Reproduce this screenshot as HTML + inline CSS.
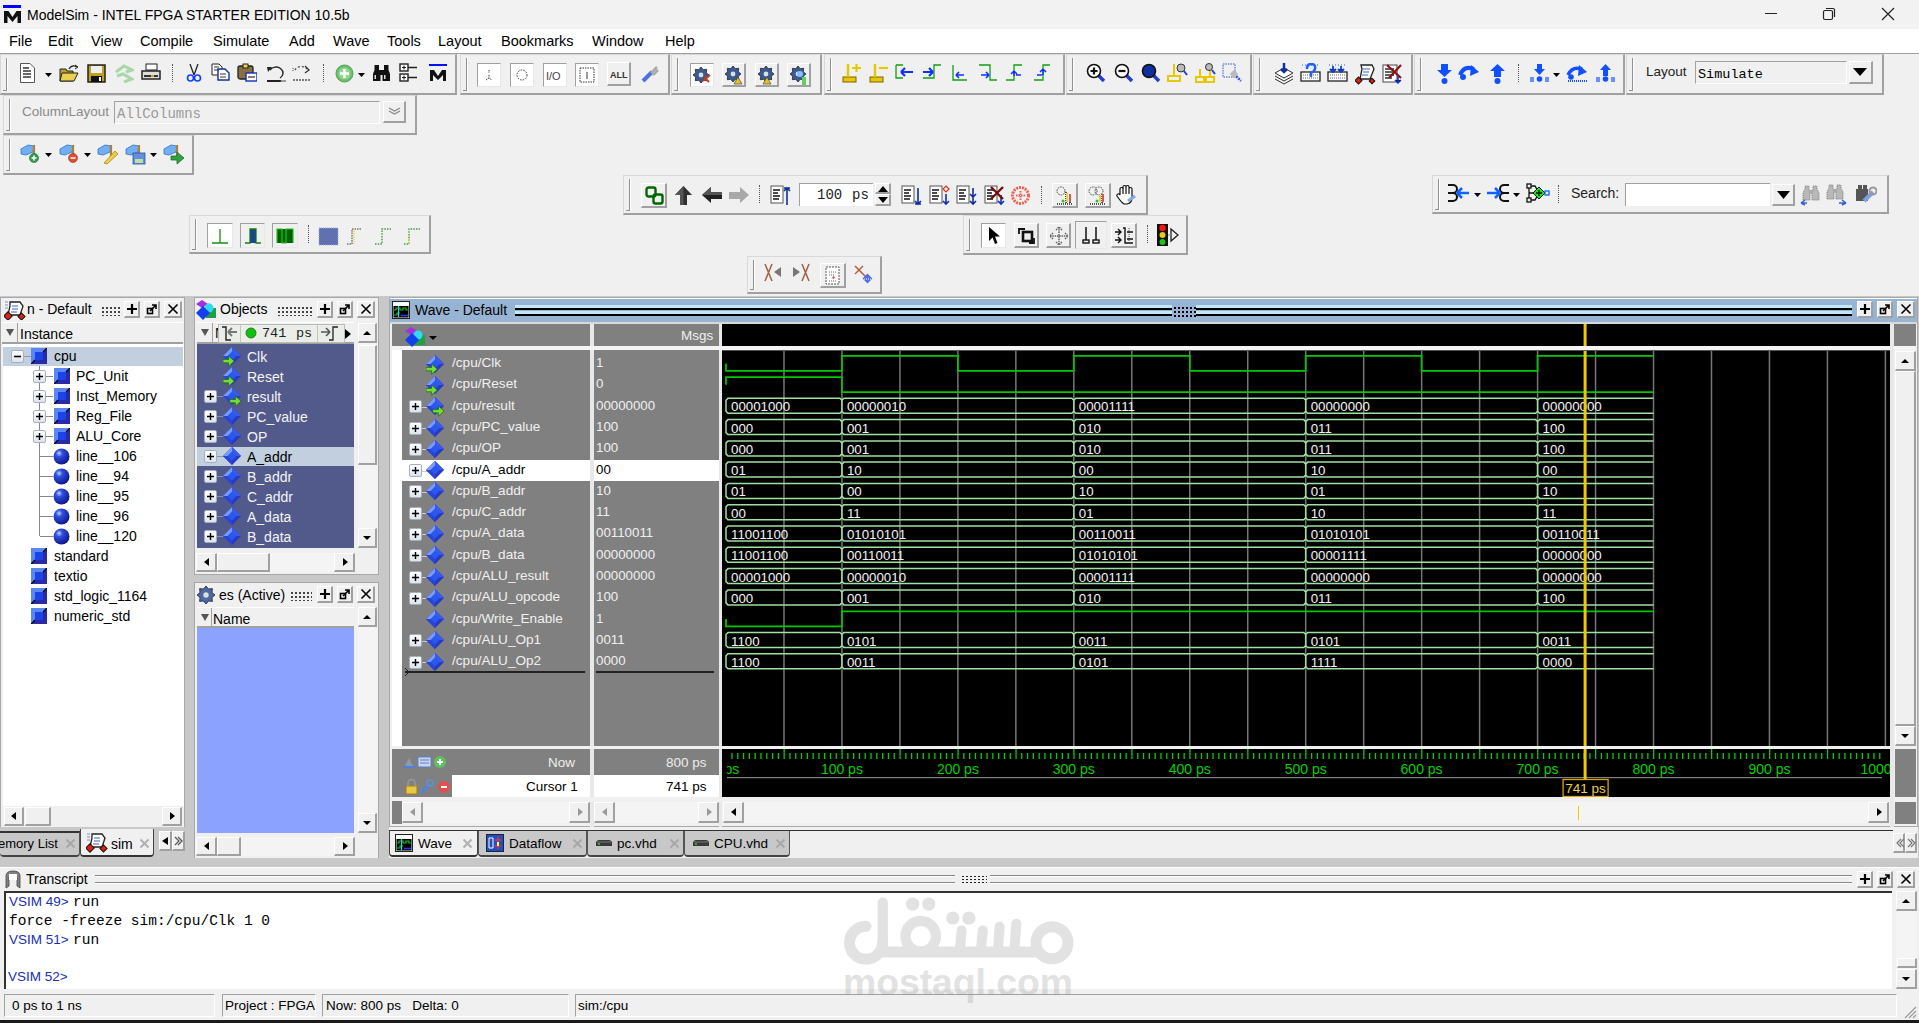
<!DOCTYPE html><html><head><meta charset="utf-8"><style>
html,body{margin:0;padding:0;}
body{width:1919px;height:1023px;position:relative;overflow:hidden;background:#f0f0f0;font-family:"Liberation Sans", sans-serif;}
div,svg{box-sizing:border-box;}
.tb{position:absolute;border-top:1px solid #d8d8d8;border-left:1px solid #d8d8d8;border-right:2px solid #a0a0a0;border-bottom:2px solid #a0a0a0;background:#f0f0f0;}
.grip{position:absolute;left:2px;top:3px;bottom:2px;width:4px;border-right:1px solid #909090;border-bottom:1px solid #909090;box-shadow:1px 0 0 #fff;}
.mono{font-family:"Liberation Mono", monospace;}
</style></head><body>
<div style="position:absolute;left:0px;top:0px;width:1919px;height:29px;background:#f2f2f2"></div>
<div style="position:absolute;left:3px;top:5px;width:18px;height:3px;background:#0000ff"></div>
<svg style="position:absolute;left:3px;top:10px;" width="19" height="14" viewBox="0 0 19 14"><path d="M1 13 V1 H5.5 L9.5 7 L13.5 1 H18 V13 H14.5 V6 L9.5 12 L4.5 6 V13 Z" fill="#111"/></svg>
<div style="position:absolute;left:27px;top:7px;font-size:14px;line-height:16px;color:#000;white-space:pre;">ModelSim - INTEL FPGA STARTER EDITION 10.5b</div>
<div style="position:absolute;left:1765px;top:13px;width:12px;height:1px;background:#222"></div>
<svg style="position:absolute;left:1822px;top:7px;" width="14" height="14" viewBox="0 0 14 14"><rect x="1.5" y="3.5" width="9" height="9" rx="1.5" fill="none" stroke="#222" stroke-width="1.2"/><path d="M4 1.5 H11 a1.5 1.5 0 0 1 1.5 1.5 V10" fill="none" stroke="#222" stroke-width="1.2"/></svg>
<svg style="position:absolute;left:1881px;top:7px;" width="14" height="14" viewBox="0 0 14 14"><path d="M1 1 L13 13 M13 1 L1 13" stroke="#222" stroke-width="1.2"/></svg>
<div style="position:absolute;left:0px;top:29px;width:1919px;height:25px;background:#fff"></div>
<div style="position:absolute;left:9px;top:33px;font-size:14.5px;line-height:16.5px;color:#000;white-space:pre;">File</div>
<div style="position:absolute;left:48px;top:33px;font-size:14.5px;line-height:16.5px;color:#000;white-space:pre;">Edit</div>
<div style="position:absolute;left:91px;top:33px;font-size:14.5px;line-height:16.5px;color:#000;white-space:pre;">View</div>
<div style="position:absolute;left:140px;top:33px;font-size:14.5px;line-height:16.5px;color:#000;white-space:pre;">Compile</div>
<div style="position:absolute;left:213px;top:33px;font-size:14.5px;line-height:16.5px;color:#000;white-space:pre;">Simulate</div>
<div style="position:absolute;left:289px;top:33px;font-size:14.5px;line-height:16.5px;color:#000;white-space:pre;">Add</div>
<div style="position:absolute;left:333px;top:33px;font-size:14.5px;line-height:16.5px;color:#000;white-space:pre;">Wave</div>
<div style="position:absolute;left:387px;top:33px;font-size:14.5px;line-height:16.5px;color:#000;white-space:pre;">Tools</div>
<div style="position:absolute;left:438px;top:33px;font-size:14.5px;line-height:16.5px;color:#000;white-space:pre;">Layout</div>
<div style="position:absolute;left:501px;top:33px;font-size:14.5px;line-height:16.5px;color:#000;white-space:pre;">Bookmarks</div>
<div style="position:absolute;left:592px;top:33px;font-size:14.5px;line-height:16.5px;color:#000;white-space:pre;">Window</div>
<div style="position:absolute;left:665px;top:33px;font-size:14.5px;line-height:16.5px;color:#000;white-space:pre;">Help</div>
<div style="position:absolute;left:0px;top:53px;width:1919px;height:1px;background:#a0a0a0"></div>
<div class="tb" style="left:0px;top:54px;width:457px;height:41px"><div class="grip"></div></div>
<div class="tb" style="left:460px;top:54px;width:210px;height:41px"><div class="grip"></div></div>
<div class="tb" style="left:671px;top:54px;width:151px;height:41px"><div class="grip"></div></div>
<div class="tb" style="left:824px;top:54px;width:241px;height:41px"><div class="grip"></div></div>
<div class="tb" style="left:1066px;top:54px;width:186px;height:41px"><div class="grip"></div></div>
<div class="tb" style="left:1253px;top:54px;width:160px;height:41px"><div class="grip"></div></div>
<div class="tb" style="left:1414px;top:54px;width:211px;height:41px"><div class="grip"></div></div>
<div class="tb" style="left:1626px;top:54px;width:258px;height:41px"><div class="grip"></div></div>
<div class="tb" style="left:3px;top:95px;width:414px;height:40px"><div class="grip"></div></div>
<div class="tb" style="left:3px;top:135px;width:191px;height:40px"><div class="grip"></div></div>
<div class="tb" style="left:623px;top:175px;width:525px;height:40px"><div class="grip"></div></div>
<div class="tb" style="left:1432px;top:175px;width:457px;height:39px"><div class="grip"></div></div>
<div class="tb" style="left:189px;top:215px;width:242px;height:39px"><div class="grip"></div></div>
<div class="tb" style="left:963px;top:215px;width:225px;height:40px"><div class="grip"></div></div>
<div class="tb" style="left:747px;top:256px;width:135px;height:38px"><div class="grip"></div></div>
<svg style="position:absolute;left:19px;top:63px;" width="20" height="20" viewBox="0 0 20 20"><path d="M1.5 0.5 H11 L15.5 5 V19.5 H1.5 Z" fill="#fff" stroke="#555"/><path d="M4 5h6M4 8h8M4 11h5M4 14h8M9 11h3" stroke="#333" stroke-width="1.3"/></svg>
<svg style="position:absolute;left:45px;top:73px;" width="7" height="4" viewBox="0 0 7 4"><path d="M0 0 H7 L3.5 4 Z" fill="#000"/></svg>
<svg style="position:absolute;left:59px;top:64px;" width="20" height="20" viewBox="0 0 20 20"><path d="M1 5 H7 L8 7 H14 V17 H1 Z" fill="#b8a030" stroke="#222"/><path d="M3 9 H19 L15 17 H1 Z" fill="#e8d050" stroke="#222"/><path d="M10 5 Q13 0 18 3" fill="none" stroke="#222" stroke-width="1.3"/><path d="M16 1 L19 3 L16 5" fill="none" stroke="#222"/></svg>
<svg style="position:absolute;left:87px;top:64px;" width="20" height="20" viewBox="0 0 20 20"><rect x="1" y="1" width="17" height="17" fill="#c0a020" stroke="#222" stroke-width="1.5"/><rect x="4" y="2" width="11" height="7" fill="#eee"/><rect x="4" y="12" width="11" height="6" fill="#111"/><rect x="12" y="13" width="2" height="4" fill="#fff"/></svg>
<svg style="position:absolute;left:114px;top:63px;" width="20" height="20" viewBox="0 0 20 20"><path d="M2 9 L10 3 L18 7 L12 9" fill="none" stroke="#a8d8a8" stroke-width="3"/><path d="M3 13 L9 11 L18 16 L10 19" fill="none" stroke="#a8d8a8" stroke-width="3"/></svg>
<svg style="position:absolute;left:141px;top:63px;" width="20" height="20" viewBox="0 0 20 20"><rect x="5" y="1" width="11" height="6" fill="#fff" stroke="#222"/><path d="M1 8 H19 V16 H1 Z" fill="#ddd" stroke="#222" stroke-width="1.5"/><rect x="3" y="12" width="14" height="2" fill="#333"/><rect x="10" y="12" width="3" height="2" fill="#e0a020"/></svg>
<div style="position:absolute;left:172px;top:64px;width:1px;height:18px;border-left:1px dotted #555"></div>
<svg style="position:absolute;left:186px;top:64px;" width="20" height="20" viewBox="0 0 20 20"><path d="M4 0 L8 11 M12 0 L8 11" stroke="#222" stroke-width="1.3"/><circle cx="4.5" cy="14" r="3" fill="none" stroke="#1040ff" stroke-width="1.6"/><circle cx="11.5" cy="14" r="3" fill="none" stroke="#1040ff" stroke-width="1.6"/></svg>
<svg style="position:absolute;left:211px;top:63px;" width="20" height="20" viewBox="0 0 20 20"><path d="M1 1 H8 L11 4 V12 H1 Z" fill="#fff" stroke="#222"/><path d="M7 6 H14 L18 10 V17 H7 Z" fill="#fff" stroke="#1030a0" stroke-width="1.4"/><path d="M3 4h5M3 7h5M9 11h6M9 14h6" stroke="#333"/></svg>
<svg style="position:absolute;left:237px;top:63px;" width="20" height="20" viewBox="0 0 20 20"><rect x="1" y="3" width="15" height="13" rx="2" fill="#8a7040" stroke="#222" stroke-width="1.3"/><rect x="6" y="1" width="5" height="4" fill="#e8d050" stroke="#222"/><rect x="9" y="10" width="11" height="8" fill="#fff" stroke="#1030c0" stroke-width="1.4"/><path d="M11 14h7" stroke="#555" stroke-width="1.5"/></svg>
<svg style="position:absolute;left:266px;top:64px;" width="20" height="20" viewBox="0 0 20 20"><path d="M4 6 A7 6 0 1 1 14 14" fill="none" stroke="#222" stroke-width="1.4"/><path d="M1 3 L6 3 L2 8 Z" fill="#222"/><rect x="1" y="16" width="14" height="2" fill="#222"/><path d="M15 16v2M17 16v2M19 16v2" stroke="#444"/></svg>
<svg style="position:absolute;left:292px;top:63px;" width="20" height="20" viewBox="0 0 20 20"><path d="M3 7 A7 6 0 0 1 15 6" fill="none" stroke="#444" stroke-width="1.2" stroke-dasharray="2 2"/><path d="M13 3 L17 7 L13 10" fill="none" stroke="#333" stroke-width="1.3"/><path d="M1 17 H19" stroke="#555" stroke-width="1.3" stroke-dasharray="2 1"/><path d="M1 5v4" stroke="#444" stroke-dasharray="1 1"/></svg>
<div style="position:absolute;left:323px;top:64px;width:1px;height:18px;border-left:1px dotted #555"></div>
<svg style="position:absolute;left:335px;top:64px;" width="20" height="20" viewBox="0 0 20 20"><circle cx="9.5" cy="9.5" r="8.5" fill="#6cc070" stroke="#50a050"/><circle cx="9.5" cy="9.5" r="6" fill="#90d890"/><path d="M9.5 5v9M5 9.5h9" stroke="#fff" stroke-width="2.5"/></svg>
<svg style="position:absolute;left:358px;top:73px;" width="7" height="4" viewBox="0 0 7 4"><path d="M0 0 H7 L3.5 4 Z" fill="#000"/></svg>
<svg style="position:absolute;left:372px;top:64px;" width="20" height="20" viewBox="0 0 20 20"><path d="M1 17 V10 L2.5 6 V1 H7 V6 L8.5 10 V17 Z M10.5 17 V10 L12 6 V1 H16.5 V6 L18 10 V17 Z" fill="#111"/><rect x="7" y="6" width="5" height="5" fill="#111"/><rect x="2.5" y="11" width="1.5" height="4" fill="#ddd"/><rect x="12" y="11" width="1.5" height="4" fill="#ddd"/></svg>
<svg style="position:absolute;left:399px;top:63px;" width="20" height="20" viewBox="0 0 20 20"><rect x="1" y="1" width="8" height="7" fill="#fff" stroke="#222" stroke-width="1.4"/><rect x="1" y="11" width="8" height="7" fill="#fff" stroke="#222" stroke-width="1.4"/><path d="M9 4.5 H18 M9 14.5 H18" stroke="#222" stroke-width="1.3"/><path d="M5 2.5 V6.5 M3 4.5 H7 M5 12.5 V16.5 M3 14.5 H7" stroke="#222" stroke-width="1.1"/></svg>
<svg style="position:absolute;left:429px;top:64px;" width="20" height="20" viewBox="0 0 20 20"><rect x="0" y="0" width="18" height="2" fill="#0010ff"/><path d="M1 17 V6 H5 L9 12 L13 6 H17 V17 H14 V11 L9 16 L4 11 V17 Z" fill="#111"/></svg>
<div style="position:absolute;left:477px;top:63px;width:24px;height:24px;background:#fff;border-top:1px solid #a0a0a0;border-left:1px solid #a0a0a0;border-right:1px solid #e8e8e8;border-bottom:1px solid #e8e8e8"></div>
<div style="position:absolute;left:510px;top:63px;width:24px;height:24px;background:#fff;border-top:1px solid #a0a0a0;border-left:1px solid #a0a0a0;border-right:1px solid #e8e8e8;border-bottom:1px solid #e8e8e8"></div>
<div style="position:absolute;left:543px;top:63px;width:24px;height:24px;background:#fff;border-top:1px solid #a0a0a0;border-left:1px solid #a0a0a0;border-right:1px solid #e8e8e8;border-bottom:1px solid #e8e8e8"></div>
<div style="position:absolute;left:575px;top:63px;width:24px;height:24px;background:#fff;border-top:1px solid #a0a0a0;border-left:1px solid #a0a0a0;border-right:1px solid #e8e8e8;border-bottom:1px solid #e8e8e8"></div>
<svg style="position:absolute;left:477px;top:63px;" width="24" height="24" viewBox="0 0 24 24"><path d="M12 7v3M12 12v3M9 17l3-2 3 2" stroke="#333" stroke-dasharray="1.5 1" fill="none"/></svg>
<svg style="position:absolute;left:510px;top:63px;" width="24" height="24" viewBox="0 0 24 24"><circle cx="12" cy="12" r="5" fill="none" stroke="#333" stroke-dasharray="1.5 1.2"/></svg>
<svg style="position:absolute;left:543px;top:63px;" width="24" height="24" viewBox="0 0 24 24"><text x="3" y="17" font-size="11" fill="#444" font-family="Liberation Sans">I/O</text></svg>
<svg style="position:absolute;left:575px;top:63px;" width="24" height="24" viewBox="0 0 24 24"><rect x="5" y="5" width="14" height="14" fill="none" stroke="#333" stroke-dasharray="1.5 1"/><path d="M12 9v7" stroke="#333"/></svg>
<div style="position:absolute;left:607px;top:62px;width:24px;height:24px;background:#f0f0f0;border-top:1px solid #fff;border-left:1px solid #fff;border-right:2px solid #a0a0a0;border-bottom:2px solid #a0a0a0"></div>
<svg style="position:absolute;left:607px;top:62px;" width="24" height="24" viewBox="0 0 24 24"><text x="3" y="16" font-size="9" fill="#333" font-family="Liberation Sans" font-weight="bold">ALL</text></svg>
<svg style="position:absolute;left:640px;top:64px;" width="20" height="20" viewBox="0 0 20 20"><path d="M3 17 L12 8" stroke="#5070e0" stroke-width="4"/><path d="M11 9 L17 3 M13 11 L18 6" stroke="#aaa" stroke-width="2.5"/></svg>
<div style="position:absolute;left:690px;top:63px;width:24px;height:24px;background:#fff;border-top:1px solid #a0a0a0;border-left:1px solid #a0a0a0;border-right:1px solid #e8e8e8;border-bottom:1px solid #e8e8e8"></div>
<svg style="position:absolute;left:690px;top:63px;" width="24" height="24" viewBox="0 0 24 24"><polygon points="19.0,12.0 16.3,14.2 16.7,17.7 13.2,17.3 11.0,20.0 8.8,17.3 5.3,17.7 5.7,14.2 3.0,12.0 5.7,9.8 5.3,6.3 8.8,6.7 11.0,4.0 13.2,6.7 16.7,6.3 16.3,9.8" fill="#3a5a90" stroke="#223" stroke-width="0.8"/><circle cx="11" cy="12" r="2.4" fill="#ddd"/><path d="M13 18 L20 12 M14 14 L19 19" stroke="#c04020" stroke-width="2"/></svg>
<div style="position:absolute;left:722px;top:63px;width:24px;height:24px;background:#f0f0f0;border-top:1px solid #fff;border-left:1px solid #fff;border-right:2px solid #a0a0a0;border-bottom:2px solid #a0a0a0"></div>
<svg style="position:absolute;left:722px;top:63px;" width="24" height="24" viewBox="0 0 24 24"><polygon points="19.0,11.0 16.3,13.2 16.7,16.7 13.2,16.3 11.0,19.0 8.8,16.3 5.3,16.7 5.7,13.2 3.0,11.0 5.7,8.8 5.3,5.3 8.8,5.7 11.0,3.0 13.2,5.7 16.7,5.3 16.3,8.8" fill="#3a5a90" stroke="#223" stroke-width="0.8"/><circle cx="11" cy="11" r="2.4" fill="#ddd"/><path d="M12 21 L16 14 L20 21 Z" fill="#e8c020" stroke="#333" stroke-width="0.6"/></svg>
<div style="position:absolute;left:755px;top:63px;width:24px;height:24px;background:#f0f0f0;border-top:1px solid #fff;border-left:1px solid #fff;border-right:2px solid #a0a0a0;border-bottom:2px solid #a0a0a0"></div>
<svg style="position:absolute;left:755px;top:63px;" width="24" height="24" viewBox="0 0 24 24"><polygon points="19.0,11.0 16.3,13.2 16.7,16.7 13.2,16.3 11.0,19.0 8.8,16.3 5.3,16.7 5.7,13.2 3.0,11.0 5.7,8.8 5.3,5.3 8.8,5.7 11.0,3.0 13.2,5.7 16.7,5.3 16.3,8.8" fill="#3a5a90" stroke="#223" stroke-width="0.8"/><circle cx="11" cy="11" r="2.4" fill="#ddd"/><path d="M8 21 L12 14 L16 21 Z" fill="#e8c020" stroke="#333" stroke-width="0.6"/></svg>
<div style="position:absolute;left:787px;top:63px;width:24px;height:24px;background:#f0f0f0;border-top:1px solid #fff;border-left:1px solid #fff;border-right:2px solid #a0a0a0;border-bottom:2px solid #a0a0a0"></div>
<svg style="position:absolute;left:787px;top:63px;" width="24" height="24" viewBox="0 0 24 24"><polygon points="19.0,11.0 16.3,13.2 16.7,16.7 13.2,16.3 11.0,19.0 8.8,16.3 5.3,16.7 5.7,13.2 3.0,11.0 5.7,8.8 5.3,5.3 8.8,5.7 11.0,3.0 13.2,5.7 16.7,5.3 16.3,8.8" fill="#3a5a90" stroke="#223" stroke-width="0.8"/><circle cx="11" cy="11" r="2.4" fill="#ddd"/><circle cx="13" cy="11" r="3" fill="#80c0ff"/><rect x="15" y="14" width="4" height="8" fill="#60d060"/></svg>
<svg style="position:absolute;left:842px;top:63px;" width="20" height="20" viewBox="0 0 20 20"><rect x="1" y="14" width="13" height="5" fill="#e8c800" stroke="#806000" stroke-width="1"/><path d="M6 1 V14" stroke="#e8c800" stroke-width="2.5"/><path d="M10 5 H19 M14.5 1 V9" stroke="#e8c800" stroke-width="2.2"/></svg>
<svg style="position:absolute;left:869px;top:63px;" width="20" height="20" viewBox="0 0 20 20"><rect x="1" y="14" width="13" height="5" fill="#e8c800" stroke="#806000" stroke-width="1"/><path d="M6 1 V14" stroke="#e8c800" stroke-width="2.5"/><path d="M10 5 H19" stroke="#e8c800" stroke-width="2.2"/></svg>
<svg style="position:absolute;left:895px;top:63px;" width="20" height="20" viewBox="0 0 20 20"><path d="M1 2 V15 H8 M8 2 H1" fill="none" stroke="#10a010" stroke-width="1.3"/><path d="M6 9 H18 M6 9 L10 5 M6 9 L10 13" stroke="#1030ff" stroke-width="2.2"/></svg>
<svg style="position:absolute;left:922px;top:63px;" width="20" height="20" viewBox="0 0 20 20"><path d="M1 15 H12 V2 H19" fill="none" stroke="#10a010" stroke-width="1.3"/><path d="M1 9 H11 M11 9 L7 5 M11 9 L7 13" stroke="#1030ff" stroke-width="2.2"/></svg>
<svg style="position:absolute;left:950px;top:63px;" width="20" height="20" viewBox="0 0 20 20"><path d="M3 2 V17 H17" fill="none" stroke="#10a010" stroke-width="1.3"/><path d="M6 12 H14 M6 12 L9 9 M6 12 L9 15" stroke="#1030ff" stroke-width="1.6"/></svg>
<svg style="position:absolute;left:978px;top:63px;" width="20" height="20" viewBox="0 0 20 20"><path d="M1 2 H12 V17 H19" fill="none" stroke="#10a010" stroke-width="1.3"/><path d="M3 12 H11 M11 12 L8 9 M11 12 L8 15" stroke="#1030ff" stroke-width="1.6"/></svg>
<svg style="position:absolute;left:1005px;top:63px;" width="20" height="20" viewBox="0 0 20 20"><path d="M1 17 H9 V2 H17" fill="none" stroke="#10a010" stroke-width="1.3"/><path d="M9 8 V13 M9 8 L6 11 M9 8 L12 11 M11 12 H16" stroke="#1030ff" stroke-width="1.5"/></svg>
<svg style="position:absolute;left:1033px;top:63px;" width="20" height="20" viewBox="0 0 20 20"><path d="M1 17 H10 V2 H17" fill="none" stroke="#10a010" stroke-width="1.3"/><path d="M10 6 V12 M10 6 L7 9 M10 6 L13 9 M4 12 H9" stroke="#1030ff" stroke-width="1.5"/></svg>
<svg style="position:absolute;left:1086px;top:63px;" width="20" height="20" viewBox="0 0 20 20"><path d="M12 12 L18 18" stroke="#2040d0" stroke-width="3.5"/><circle cx="8" cy="8" r="6.5" fill="#fff" stroke="#111" stroke-width="1.6"/><path d="M8 4.5v7M4.5 8h7" stroke="#111" stroke-width="2.2"/></svg>
<svg style="position:absolute;left:1114px;top:63px;" width="20" height="20" viewBox="0 0 20 20"><path d="M12 12 L18 18" stroke="#2040d0" stroke-width="3.5"/><circle cx="8" cy="8" r="6.5" fill="#fff" stroke="#111" stroke-width="1.6"/><path d="M4.5 8h7" stroke="#111" stroke-width="2.2"/></svg>
<svg style="position:absolute;left:1141px;top:63px;" width="20" height="20" viewBox="0 0 20 20"><path d="M12 12 L18 18" stroke="#2040d0" stroke-width="3.5"/><circle cx="8" cy="8" r="6.5" fill="#1030a0" stroke="#111" stroke-width="1.6"/></svg>
<svg style="position:absolute;left:1167px;top:63px;" width="22" height="20" viewBox="0 0 22 20"><rect x="1" y="13" width="12" height="5" fill="none" stroke="#e8c800" stroke-width="2"/><path d="M7 1 V13" stroke="#e8c800" stroke-width="2"/><circle cx="14" cy="5" r="4" fill="#bbb" stroke="#333"/><path d="M17 8 L20 12" stroke="#2040d0" stroke-width="2"/></svg>
<svg style="position:absolute;left:1195px;top:63px;" width="22" height="20" viewBox="0 0 22 20"><rect x="1" y="14" width="8" height="5" fill="none" stroke="#e8c800" stroke-width="2"/><rect x="11" y="14" width="8" height="5" fill="none" stroke="#e8c800" stroke-width="2"/><path d="M5 6 V14 M15 6 V14" stroke="#e8c800" stroke-width="2"/><circle cx="14" cy="4" r="3.5" fill="#bbb" stroke="#333"/><path d="M17 7 L20 11" stroke="#2040d0" stroke-width="2"/></svg>
<svg style="position:absolute;left:1222px;top:63px;" width="22" height="22" viewBox="0 0 22 22"><rect x="1" y="1" width="12" height="13" fill="none" stroke="#3050d0" stroke-dasharray="1.5 1"/><path d="M12 11 L19 18" stroke="#3050d0" stroke-width="2.5" stroke-dasharray="2 1"/><rect x="9" y="8" width="6" height="6" fill="#bbb" transform="rotate(45 12 11)"/></svg>
<svg style="position:absolute;left:1273px;top:63px;" width="22" height="22" viewBox="0 0 22 22"><path d="M2 10 L11 5 L20 10 L11 15 Z" fill="#fff" stroke="#333"/><path d="M2 13 L11 18 L20 13 M2 16 L11 21 L20 16" fill="none" stroke="#333"/><path d="M11 0 V9 M8 6 L11 9 L14 6" stroke="#1030a0" stroke-width="2.5"/></svg>
<svg style="position:absolute;left:1300px;top:63px;" width="22" height="22" viewBox="0 0 22 22"><rect x="1" y="9" width="19" height="9" fill="#fff" stroke="#222" stroke-width="1.3"/><path d="M3 12h15M3 15h15" stroke="#666" stroke-dasharray="1 1"/><path d="M7 6 Q7 1 11 1 Q16 1 15 6 Q14 9 11 10 V14" fill="none" stroke="#2060ff" stroke-width="2.5"/><path d="M2 2h17" stroke="#2060ff" stroke-dasharray="1 2"/></svg>
<svg style="position:absolute;left:1327px;top:63px;" width="22" height="22" viewBox="0 0 22 22"><rect x="1" y="9" width="19" height="9" fill="#fff" stroke="#222" stroke-width="1.3"/><path d="M3 12h15M3 15h15" stroke="#666" stroke-dasharray="1 1"/><path d="M6 3 V9 M3 6 L6 9 L9 6 M14 3 V9 M11 6 L14 9 L17 6" stroke="#1040d0" stroke-width="1.8"/><path d="M2 2h17" stroke="#2060ff" stroke-dasharray="1 2"/></svg>
<svg style="position:absolute;left:1355px;top:63px;" width="22" height="22" viewBox="0 0 22 22"><path d="M6 2 H17 L19 6 L15 16 H5 L7 6 Z" fill="#fff" stroke="#222" stroke-width="1.3"/><path d="M8 6h7M8 9h6M7 12h6" stroke="#4060c0"/><rect x="1" y="15" width="5" height="5" fill="#e02010" stroke="#111" transform="rotate(45 3.5 17.5)"/><rect x="15" y="16" width="4" height="4" fill="#e02010" stroke="#111" transform="rotate(45 17 18)"/></svg>
<svg style="position:absolute;left:1382px;top:63px;" width="22" height="22" viewBox="0 0 22 22"><rect x="1" y="2" width="14" height="17" fill="#fff" stroke="#444"/><path d="M3 6h9M3 9h8M3 12h9M3 15h7" stroke="#333" stroke-width="1.3"/><path d="M5 2 L19 15 M19 2 L7 15" stroke="#901010" stroke-width="2.2"/><path d="M16 13 V20 M13 17 L16 20 L19 17" stroke="#1030c0" stroke-width="1.5"/></svg>
<svg style="position:absolute;left:1436px;top:63px;" width="20" height="22" viewBox="0 0 20 22"><path d="M5 1 H12 V7 H16 L8.5 14 L1 7 H5 Z" fill="#1050ff"/><circle cx="8.5" cy="18" r="3" fill="#1050ff"/></svg>
<svg style="position:absolute;left:1458px;top:63px;" width="24" height="20" viewBox="0 0 24 20"><path d="M2 12 Q6 2 16 6" fill="none" stroke="#1050ff" stroke-width="4"/><path d="M13 2 L21 9 L12 13 Z" fill="#1050ff"/><circle cx="5" cy="14" r="3" fill="#1050ff"/></svg>
<svg style="position:absolute;left:1489px;top:63px;" width="20" height="22" viewBox="0 0 20 22"><path d="M5 14 H12 V8 H16 L8.5 1 L1 8 H5 Z" fill="#1050ff"/><circle cx="8.5" cy="18" r="3" fill="#1050ff"/></svg>
<div style="position:absolute;left:1518px;top:64px;width:1px;height:18px;border-left:1px dotted #555"></div>
<svg style="position:absolute;left:1530px;top:63px;" width="20" height="22" viewBox="0 0 20 22"><path d="M7 1 H12 V6 H15 L9.5 12 L4 6 H7 Z" fill="#1050ff"/><circle cx="9.5" cy="16" r="2.8" fill="#1050ff"/><path d="M1 14v5M3 14v5M16 14v5M18 14v5" stroke="#1050ff" stroke-width="1.2"/></svg>
<svg style="position:absolute;left:1553px;top:73px;" width="7" height="4" viewBox="0 0 7 4"><path d="M0 0 H7 L3.5 4 Z" fill="#000"/></svg>
<svg style="position:absolute;left:1566px;top:63px;" width="24" height="22" viewBox="0 0 24 22"><path d="M2 12 Q6 3 16 6" fill="none" stroke="#1050ff" stroke-width="3.5"/><path d="M13 2 L21 9 L12 13 Z" fill="#1050ff"/><circle cx="5" cy="14" r="2.8" fill="#1050ff"/><path d="M2 18 H22" stroke="#1050ff" stroke-width="2" stroke-dasharray="1 1"/></svg>
<svg style="position:absolute;left:1596px;top:63px;" width="20" height="22" viewBox="0 0 20 22"><path d="M7 13 H12 V7 H15 L9.5 1 L4 7 H7 Z" fill="#1050ff"/><circle cx="9.5" cy="16" r="2.8" fill="#1050ff"/><path d="M1 14v5M3 14v5M16 14v5M18 14v5" stroke="#1050ff" stroke-width="1.2"/></svg>
<div style="position:absolute;left:1646px;top:64px;font-size:13.5px;line-height:15.5px;color:#222;white-space:pre;">Layout</div>
<div style="position:absolute;left:1695px;top:61px;width:152px;height:23px;background:#f0f0f0;border-top:1px solid #a0a0a0;border-left:1px solid #a0a0a0;border-bottom:1px solid #fff;border-right:1px solid #fff"></div>
<div style="position:absolute;left:1698px;top:67px;font-size:13.5px;line-height:15.5px;color:#000;white-space:pre;font-family:'Liberation Mono',monospace">Simulate</div>
<div style="position:absolute;left:1849px;top:61px;width:24px;height:23px;background:#f0f0f0;border-top:1px solid #fff;border-left:1px solid #fff;border-right:2px solid #a0a0a0;border-bottom:2px solid #a0a0a0"></div>
<svg style="position:absolute;left:1852px;top:67px;" width="16" height="10" viewBox="0 0 16 10"><path d="M1 1 H15 L8 9 Z" fill="#000"/></svg>
<div style="position:absolute;left:0px;top:296px;width:1919px;height:570px;background:#c8c8c8"></div>
<div style="position:absolute;left:0px;top:297px;width:185px;height:561px;background:#f0f0f0;border:1px solid #a8a8a8"></div>
<svg style="position:absolute;left:4px;top:300px;" width="22" height="20" viewBox="0 0 22 20"><path d="M6 2 H16 L19 6 L16 15 H4 L6 6 Z" fill="#fff" stroke="#222" stroke-width="1.3"/><path d="M8 6h6M8 9h6M7 12h6" stroke="#4060c0"/><path d="M1 2h3M1 5h3M1 8h3" stroke="#8090c0"/><rect x="1" y="13" width="6" height="6" fill="#e02010" stroke="#111" transform="rotate(45 4 16)"/><rect x="15" y="14" width="5" height="5" fill="#e02010" stroke="#111" transform="rotate(45 17.5 16.5)"/></svg>
<div style="position:absolute;left:27px;top:301px;font-size:14px;line-height:16px;color:#000;white-space:pre;">n - Default</div>
<div style="position:absolute;left:101px;top:306px;width:19px;height:10px;background-image:radial-gradient(#444 0.8px, transparent 1px);background-size:4px 4px;background-position:0 0"></div>
<div style="position:absolute;left:124px;top:301px;width:16px;height:17px;background:#f0f0f0;border-right:2px solid #a0a0a0;border-bottom:2px solid #a0a0a0;border-top:1px solid #fff;border-left:1px solid #fff"></div>
<div style="position:absolute;left:144px;top:301px;width:16px;height:17px;background:#f0f0f0;border-right:2px solid #a0a0a0;border-bottom:2px solid #a0a0a0;border-top:1px solid #fff;border-left:1px solid #fff"></div>
<div style="position:absolute;left:164px;top:301px;width:18px;height:17px;background:#f0f0f0;border-right:2px solid #a0a0a0;border-bottom:2px solid #a0a0a0;border-top:1px solid #fff;border-left:1px solid #fff"></div>
<svg style="position:absolute;left:126px;top:303px;" width="12" height="12" viewBox="0 0 12 12"><path d="M6 1v10M1 6h10" stroke="#000" stroke-width="2.2"/></svg>
<svg style="position:absolute;left:146px;top:303px;" width="12" height="12" viewBox="0 0 12 12"><rect x="1.5" y="5.5" width="5" height="5" fill="none" stroke="#000" stroke-width="1.6"/><path d="M4 8 L10 2 M6 2h4v4" fill="none" stroke="#000" stroke-width="1.6"/></svg>
<svg style="position:absolute;left:167px;top:303px;" width="12" height="12" viewBox="0 0 12 12"><path d="M1.5 1.5 L10.5 10.5 M10.5 1.5 L1.5 10.5" stroke="#000" stroke-width="1.6"/></svg>
<div style="position:absolute;left:2px;top:322px;width:181px;height:22px;background:#f0f0f0;border-top:1px solid #fff;border-bottom:2px solid #a0a0a0"></div>
<div style="position:absolute;left:17px;top:323px;width:1px;height:20px;background:#a0a0a0"></div>
<svg style="position:absolute;left:5px;top:328px;" width="10" height="10" viewBox="0 0 10 10"><path d="M1 1 H9 L5 8 Z" fill="#555"/></svg>
<div style="position:absolute;left:20px;top:326px;font-size:14px;line-height:16px;color:#000;white-space:pre;">Instance</div>
<div style="position:absolute;left:3px;top:344px;width:181px;height:462px;background:#fff"></div>
<div style="position:absolute;left:3px;top:347px;width:180px;height:19px;background:#c2cfdf"></div>
<div style="position:absolute;left:39px;top:366px;width:1px;height:170px;background:#888"></div>
<div style="position:absolute;left:11px;top:350px;width:13px;height:13px;background:linear-gradient(#fff,#dde4ee);border:1px solid #a8b0c0;border-radius:2px"></div>
<svg style="position:absolute;left:11px;top:350px;" width="13" height="13" viewBox="0 0 13 13"><path d="M3 6.5h7" stroke="#000" stroke-width="1.6"/></svg>
<div style="position:absolute;left:24px;top:356px;width:7px;height:1px;background:#999"></div>
<svg style="position:absolute;left:31px;top:348px;" width="16" height="16" viewBox="0 0 16 16"><rect x="0" y="0" width="16" height="16" fill="#2a2aa8"/><path d="M0 0 H16 L12 4 H4 V12 L0 16 Z" fill="#5a88f0"/><rect x="4" y="4" width="8" height="8" fill="#1a44e8"/><path d="M0 16 L4 12 M16 0 L12 4" stroke="#000" stroke-width="1.2"/></svg>
<div style="position:absolute;left:54px;top:348px;font-size:14px;line-height:16px;color:#000;white-space:pre;">cpu</div>
<div style="position:absolute;left:40px;top:376px;width:13px;height:1px;background:#888"></div>
<div style="position:absolute;left:33px;top:370px;width:13px;height:13px;background:linear-gradient(#fff,#dde4ee);border:1px solid #a8b0c0;border-radius:2px"></div>
<svg style="position:absolute;left:33px;top:370px;" width="13" height="13" viewBox="0 0 13 13"><path d="M6.5 3v7M3 6.5h7" stroke="#000" stroke-width="1.4"/></svg>
<svg style="position:absolute;left:54px;top:368px;" width="16" height="16" viewBox="0 0 16 16"><rect x="0" y="0" width="16" height="16" fill="#2a2aa8"/><path d="M0 0 H16 L12 4 H4 V12 L0 16 Z" fill="#5a88f0"/><rect x="4" y="4" width="8" height="8" fill="#1a44e8"/><path d="M0 16 L4 12 M16 0 L12 4" stroke="#000" stroke-width="1.2"/></svg>
<div style="position:absolute;left:76px;top:368px;font-size:14px;line-height:16px;color:#000;white-space:pre;">PC_Unit</div>
<div style="position:absolute;left:40px;top:396px;width:13px;height:1px;background:#888"></div>
<div style="position:absolute;left:33px;top:390px;width:13px;height:13px;background:linear-gradient(#fff,#dde4ee);border:1px solid #a8b0c0;border-radius:2px"></div>
<svg style="position:absolute;left:33px;top:390px;" width="13" height="13" viewBox="0 0 13 13"><path d="M6.5 3v7M3 6.5h7" stroke="#000" stroke-width="1.4"/></svg>
<svg style="position:absolute;left:54px;top:388px;" width="16" height="16" viewBox="0 0 16 16"><rect x="0" y="0" width="16" height="16" fill="#2a2aa8"/><path d="M0 0 H16 L12 4 H4 V12 L0 16 Z" fill="#5a88f0"/><rect x="4" y="4" width="8" height="8" fill="#1a44e8"/><path d="M0 16 L4 12 M16 0 L12 4" stroke="#000" stroke-width="1.2"/></svg>
<div style="position:absolute;left:76px;top:388px;font-size:14px;line-height:16px;color:#000;white-space:pre;">Inst_Memory</div>
<div style="position:absolute;left:40px;top:416px;width:13px;height:1px;background:#888"></div>
<div style="position:absolute;left:33px;top:410px;width:13px;height:13px;background:linear-gradient(#fff,#dde4ee);border:1px solid #a8b0c0;border-radius:2px"></div>
<svg style="position:absolute;left:33px;top:410px;" width="13" height="13" viewBox="0 0 13 13"><path d="M6.5 3v7M3 6.5h7" stroke="#000" stroke-width="1.4"/></svg>
<svg style="position:absolute;left:54px;top:408px;" width="16" height="16" viewBox="0 0 16 16"><rect x="0" y="0" width="16" height="16" fill="#2a2aa8"/><path d="M0 0 H16 L12 4 H4 V12 L0 16 Z" fill="#5a88f0"/><rect x="4" y="4" width="8" height="8" fill="#1a44e8"/><path d="M0 16 L4 12 M16 0 L12 4" stroke="#000" stroke-width="1.2"/></svg>
<div style="position:absolute;left:76px;top:408px;font-size:14px;line-height:16px;color:#000;white-space:pre;">Reg_File</div>
<div style="position:absolute;left:40px;top:436px;width:13px;height:1px;background:#888"></div>
<div style="position:absolute;left:33px;top:430px;width:13px;height:13px;background:linear-gradient(#fff,#dde4ee);border:1px solid #a8b0c0;border-radius:2px"></div>
<svg style="position:absolute;left:33px;top:430px;" width="13" height="13" viewBox="0 0 13 13"><path d="M6.5 3v7M3 6.5h7" stroke="#000" stroke-width="1.4"/></svg>
<svg style="position:absolute;left:54px;top:428px;" width="16" height="16" viewBox="0 0 16 16"><rect x="0" y="0" width="16" height="16" fill="#2a2aa8"/><path d="M0 0 H16 L12 4 H4 V12 L0 16 Z" fill="#5a88f0"/><rect x="4" y="4" width="8" height="8" fill="#1a44e8"/><path d="M0 16 L4 12 M16 0 L12 4" stroke="#000" stroke-width="1.2"/></svg>
<div style="position:absolute;left:76px;top:428px;font-size:14px;line-height:16px;color:#000;white-space:pre;">ALU_Core</div>
<div style="position:absolute;left:40px;top:456px;width:13px;height:1px;background:#888"></div>
<svg style="position:absolute;left:53px;top:448px;" width="17" height="17" viewBox="0 0 17 17"><defs><radialGradient id="bg1" cx="0.35" cy="0.3" r="0.7"><stop offset="0" stop-color="#c0d0ff"/><stop offset="0.3" stop-color="#3050e0"/><stop offset="1" stop-color="#101890"/></radialGradient></defs><circle cx="8.5" cy="8.5" r="8" fill="url(#bg1)"/></svg>
<div style="position:absolute;left:76px;top:448px;font-size:14px;line-height:16px;color:#000;white-space:pre;">line__106</div>
<div style="position:absolute;left:40px;top:476px;width:13px;height:1px;background:#888"></div>
<svg style="position:absolute;left:53px;top:468px;" width="17" height="17" viewBox="0 0 17 17"><defs><radialGradient id="bg1" cx="0.35" cy="0.3" r="0.7"><stop offset="0" stop-color="#c0d0ff"/><stop offset="0.3" stop-color="#3050e0"/><stop offset="1" stop-color="#101890"/></radialGradient></defs><circle cx="8.5" cy="8.5" r="8" fill="url(#bg1)"/></svg>
<div style="position:absolute;left:76px;top:468px;font-size:14px;line-height:16px;color:#000;white-space:pre;">line__94</div>
<div style="position:absolute;left:40px;top:496px;width:13px;height:1px;background:#888"></div>
<svg style="position:absolute;left:53px;top:488px;" width="17" height="17" viewBox="0 0 17 17"><defs><radialGradient id="bg1" cx="0.35" cy="0.3" r="0.7"><stop offset="0" stop-color="#c0d0ff"/><stop offset="0.3" stop-color="#3050e0"/><stop offset="1" stop-color="#101890"/></radialGradient></defs><circle cx="8.5" cy="8.5" r="8" fill="url(#bg1)"/></svg>
<div style="position:absolute;left:76px;top:488px;font-size:14px;line-height:16px;color:#000;white-space:pre;">line__95</div>
<div style="position:absolute;left:40px;top:516px;width:13px;height:1px;background:#888"></div>
<svg style="position:absolute;left:53px;top:508px;" width="17" height="17" viewBox="0 0 17 17"><defs><radialGradient id="bg1" cx="0.35" cy="0.3" r="0.7"><stop offset="0" stop-color="#c0d0ff"/><stop offset="0.3" stop-color="#3050e0"/><stop offset="1" stop-color="#101890"/></radialGradient></defs><circle cx="8.5" cy="8.5" r="8" fill="url(#bg1)"/></svg>
<div style="position:absolute;left:76px;top:508px;font-size:14px;line-height:16px;color:#000;white-space:pre;">line__96</div>
<div style="position:absolute;left:40px;top:536px;width:13px;height:1px;background:#888"></div>
<svg style="position:absolute;left:53px;top:528px;" width="17" height="17" viewBox="0 0 17 17"><defs><radialGradient id="bg1" cx="0.35" cy="0.3" r="0.7"><stop offset="0" stop-color="#c0d0ff"/><stop offset="0.3" stop-color="#3050e0"/><stop offset="1" stop-color="#101890"/></radialGradient></defs><circle cx="8.5" cy="8.5" r="8" fill="url(#bg1)"/></svg>
<div style="position:absolute;left:76px;top:528px;font-size:14px;line-height:16px;color:#000;white-space:pre;">line__120</div>
<svg style="position:absolute;left:31px;top:548px;" width="16" height="16" viewBox="0 0 16 16"><rect x="0" y="0" width="16" height="16" fill="#2a2aa8"/><path d="M0 0 H16 L12 4 H4 V12 L0 16 Z" fill="#5a88f0"/><rect x="4" y="4" width="8" height="8" fill="#1a44e8"/><path d="M0 16 L4 12 M16 0 L12 4" stroke="#000" stroke-width="1.2"/></svg>
<div style="position:absolute;left:54px;top:548px;font-size:14px;line-height:16px;color:#000;white-space:pre;">standard</div>
<svg style="position:absolute;left:31px;top:568px;" width="16" height="16" viewBox="0 0 16 16"><rect x="0" y="0" width="16" height="16" fill="#2a2aa8"/><path d="M0 0 H16 L12 4 H4 V12 L0 16 Z" fill="#5a88f0"/><rect x="4" y="4" width="8" height="8" fill="#1a44e8"/><path d="M0 16 L4 12 M16 0 L12 4" stroke="#000" stroke-width="1.2"/></svg>
<div style="position:absolute;left:54px;top:568px;font-size:14px;line-height:16px;color:#000;white-space:pre;">textio</div>
<svg style="position:absolute;left:31px;top:588px;" width="16" height="16" viewBox="0 0 16 16"><rect x="0" y="0" width="16" height="16" fill="#2a2aa8"/><path d="M0 0 H16 L12 4 H4 V12 L0 16 Z" fill="#5a88f0"/><rect x="4" y="4" width="8" height="8" fill="#1a44e8"/><path d="M0 16 L4 12 M16 0 L12 4" stroke="#000" stroke-width="1.2"/></svg>
<div style="position:absolute;left:54px;top:588px;font-size:14px;line-height:16px;color:#000;white-space:pre;">std_logic_1164</div>
<svg style="position:absolute;left:31px;top:608px;" width="16" height="16" viewBox="0 0 16 16"><rect x="0" y="0" width="16" height="16" fill="#2a2aa8"/><path d="M0 0 H16 L12 4 H4 V12 L0 16 Z" fill="#5a88f0"/><rect x="4" y="4" width="8" height="8" fill="#1a44e8"/><path d="M0 16 L4 12 M16 0 L12 4" stroke="#000" stroke-width="1.2"/></svg>
<div style="position:absolute;left:54px;top:608px;font-size:14px;line-height:16px;color:#000;white-space:pre;">numeric_std</div>
<div style="position:absolute;left:3px;top:806px;width:181px;height:21px;background:#f0f0f0"></div>
<div style="position:absolute;left:4px;top:807px;width:20px;height:19px;background:#f0f0f0;border-top:1px solid #fff;border-left:1px solid #fff;border-right:2px solid #a0a0a0;border-bottom:2px solid #a0a0a0"></div>
<svg style="position:absolute;left:9px;top:811px;" width="10" height="10" viewBox="0 0 10 10"><path d="M7 1 V9 L2 5 Z" fill="#000"/></svg>
<div style="position:absolute;left:25px;top:807px;width:26px;height:19px;background:#f0f0f0;border-top:1px solid #fff;border-left:1px solid #fff;border-right:2px solid #a0a0a0;border-bottom:2px solid #a0a0a0"></div>
<div style="position:absolute;left:162px;top:807px;width:20px;height:19px;background:#f0f0f0;border-top:1px solid #fff;border-left:1px solid #fff;border-right:2px solid #a0a0a0;border-bottom:2px solid #a0a0a0"></div>
<svg style="position:absolute;left:167px;top:811px;" width="10" height="10" viewBox="0 0 10 10"><path d="M3 1 V9 L8 5 Z" fill="#000"/></svg>
<div style="position:absolute;left:194px;top:297px;width:185px;height:278px;background:#f0f0f0;border:1px solid #a8a8a8"></div>
<svg style="position:absolute;left:196px;top:300px;" width="22" height="21" viewBox="0 0 22 21"><path d="M6 0 L12 4 L6 8 L0 4 Z" fill="#a030e0"/><rect x="10" y="8" width="10" height="10" fill="#20a040"/><path d="M9 13 L17 7 L13 3 Z" fill="#30d8f0"/><circle cx="13" cy="8" r="4.5" fill="#30d8f0"/><path d="M7 6 L14 13 L7 20 L0 13 Z" fill="#1040f0"/></svg>
<div style="position:absolute;left:220px;top:301px;font-size:14px;line-height:16px;color:#000;white-space:pre;">Objects</div>
<div style="position:absolute;left:277px;top:306px;width:37px;height:10px;background-image:radial-gradient(#444 0.8px, transparent 1px);background-size:4px 4px;background-position:0 0"></div>
<div style="position:absolute;left:317px;top:301px;width:16px;height:17px;background:#f0f0f0;border-right:2px solid #a0a0a0;border-bottom:2px solid #a0a0a0;border-top:1px solid #fff;border-left:1px solid #fff"></div>
<div style="position:absolute;left:337px;top:301px;width:16px;height:17px;background:#f0f0f0;border-right:2px solid #a0a0a0;border-bottom:2px solid #a0a0a0;border-top:1px solid #fff;border-left:1px solid #fff"></div>
<div style="position:absolute;left:357px;top:301px;width:18px;height:17px;background:#f0f0f0;border-right:2px solid #a0a0a0;border-bottom:2px solid #a0a0a0;border-top:1px solid #fff;border-left:1px solid #fff"></div>
<svg style="position:absolute;left:319px;top:303px;" width="12" height="12" viewBox="0 0 12 12"><path d="M6 1v10M1 6h10" stroke="#000" stroke-width="2.2"/></svg>
<svg style="position:absolute;left:339px;top:303px;" width="12" height="12" viewBox="0 0 12 12"><rect x="1.5" y="5.5" width="5" height="5" fill="none" stroke="#000" stroke-width="1.6"/><path d="M4 8 L10 2 M6 2h4v4" fill="none" stroke="#000" stroke-width="1.6"/></svg>
<svg style="position:absolute;left:360px;top:303px;" width="12" height="12" viewBox="0 0 12 12"><path d="M1.5 1.5 L10.5 10.5 M10.5 1.5 L1.5 10.5" stroke="#000" stroke-width="1.6"/></svg>
<div style="position:absolute;left:197px;top:322px;width:157px;height:22px;background:#f0f0f0;border-top:1px solid #fff;border-bottom:2px solid #a0a0a0"></div>
<div style="position:absolute;left:212px;top:323px;width:1px;height:20px;background:#a0a0a0"></div>
<svg style="position:absolute;left:200px;top:328px;" width="10" height="10" viewBox="0 0 10 10"><path d="M1 1 H9 L5 8 Z" fill="#555"/></svg>
<div style="position:absolute;left:215px;top:325px;font-size:14px;line-height:16px;color:#000;white-space:pre;">N</div>
<div style="position:absolute;left:218px;top:324px;width:127px;height:19px;background:#ebede8;border:1px solid #b8bcb4"></div>
<svg style="position:absolute;left:220px;top:325px;" width="20" height="17" viewBox="0 0 20 17"><path d="M2 2 H6 V15 H11" fill="none" stroke="#222" stroke-width="1.4"/><path d="M8 7 H17 M8 7 L12 3 M8 7 L12 11" stroke="#777" stroke-width="1.8"/></svg>
<div style="position:absolute;left:240px;top:325px;width:1px;height:17px;background:#c0c8b8"></div>
<svg style="position:absolute;left:245px;top:327px;" width="12" height="12" viewBox="0 0 12 12"><circle cx="6" cy="6" r="5" fill="#10c010" stroke="#087008" stroke-width="0.8"/></svg>
<div style="position:absolute;left:262px;top:326px;font-size:13.5px;line-height:15.5px;color:#222;white-space:pre;font-family:'Liberation Mono',monospace">741</div>
<div style="position:absolute;left:296px;top:326px;font-size:13.5px;line-height:15.5px;color:#222;white-space:pre;font-family:'Liberation Mono',monospace">ps</div>
<div style="position:absolute;left:317px;top:325px;width:1px;height:17px;background:#c0c8b8"></div>
<svg style="position:absolute;left:320px;top:325px;" width="20" height="17" viewBox="0 0 20 17"><path d="M1 7 H10 M10 7 L6 3 M10 7 L6 11" stroke="#555" stroke-width="1.6"/><path d="M9 15 H13 V2 H18" fill="none" stroke="#222" stroke-width="1.3"/></svg>
<svg style="position:absolute;left:344px;top:328px;" width="8" height="12" viewBox="0 0 8 12"><path d="M1 1 L7 6 L1 11 Z" fill="#000"/></svg>
<div style="position:absolute;left:358px;top:323px;width:19px;height:225px;background:#f4f4f4"></div>
<div style="position:absolute;left:358px;top:323px;width:19px;height:20px;background:#f0f0f0;border-top:1px solid #fff;border-left:1px solid #fff;border-right:2px solid #a0a0a0;border-bottom:2px solid #a0a0a0"></div>
<svg style="position:absolute;left:362px;top:330px;" width="10" height="6" viewBox="0 0 10 6"><path d="M1 5 L5 1 L9 5 Z" fill="#000"/></svg>
<div style="position:absolute;left:358px;top:345px;width:19px;height:120px;background:#f0f0f0;border-top:1px solid #fff;border-left:1px solid #fff;border-right:2px solid #a0a0a0;border-bottom:2px solid #a0a0a0"></div>
<div style="position:absolute;left:358px;top:528px;width:19px;height:20px;background:#f0f0f0;border-top:1px solid #fff;border-left:1px solid #fff;border-right:2px solid #a0a0a0;border-bottom:2px solid #a0a0a0"></div>
<svg style="position:absolute;left:362px;top:535px;" width="10" height="6" viewBox="0 0 10 6"><path d="M1 1 L5 5 L9 1 Z" fill="#000"/></svg>
<div style="position:absolute;left:197px;top:344px;width:157px;height:204px;background:#525a8c"></div>
<div style="position:absolute;left:197px;top:447px;width:157px;height:19px;background:#c2cfdf"></div>
<svg style="position:absolute;left:223px;top:347px;" width="20" height="20" viewBox="0 0 20 20"><g transform="scale(1.13)"><path d="M8 0 L16 8 L8 16 L0 8 Z" fill="#2a3ac0"/><path d="M8 0 L16 8 L8 8 Z" fill="#3a5ae8"/><path d="M8 0 L0 8 L8 8 Z" fill="#7a9af8"/><path d="M0 8 L8 16 L8 8 Z" fill="#2a44d8"/><path d="M8 4 L12 8 L8 12 L4 8 Z" fill="#2858f0"/><path d="M0 11 H5 V8 L10 12.5 L5 17 V14 H0 Z" fill="#70e030" stroke="#206010" stroke-width="0.6"/></g></svg>
<div style="position:absolute;left:247px;top:349px;font-size:14px;line-height:16px;color:#f4f4f4;white-space:pre;">Clk</div>
<svg style="position:absolute;left:223px;top:367px;" width="20" height="20" viewBox="0 0 20 20"><g transform="scale(1.13)"><path d="M8 0 L16 8 L8 16 L0 8 Z" fill="#2a3ac0"/><path d="M8 0 L16 8 L8 8 Z" fill="#3a5ae8"/><path d="M8 0 L0 8 L8 8 Z" fill="#7a9af8"/><path d="M0 8 L8 16 L8 8 Z" fill="#2a44d8"/><path d="M8 4 L12 8 L8 12 L4 8 Z" fill="#2858f0"/><path d="M0 11 H5 V8 L10 12.5 L5 17 V14 H0 Z" fill="#70e030" stroke="#206010" stroke-width="0.6"/></g></svg>
<div style="position:absolute;left:247px;top:369px;font-size:14px;line-height:16px;color:#f4f4f4;white-space:pre;">Reset</div>
<div style="position:absolute;left:204px;top:390px;width:13px;height:13px;background:linear-gradient(#fff,#dde4ee);border:1px solid #a8b0c0;border-radius:2px"></div>
<svg style="position:absolute;left:204px;top:390px;" width="13" height="13" viewBox="0 0 13 13"><path d="M6.5 3v7M3 6.5h7" stroke="#000" stroke-width="1.4"/></svg>
<div style="position:absolute;left:217px;top:396px;width:8px;height:1px;background:#8890b0"></div>
<svg style="position:absolute;left:223px;top:387px;" width="20" height="20" viewBox="0 0 20 20"><g transform="scale(1.13)"><path d="M8 0 L16 8 L8 16 L0 8 Z" fill="#2a3ac0"/><path d="M8 0 L16 8 L8 8 Z" fill="#3a5ae8"/><path d="M8 0 L0 8 L8 8 Z" fill="#7a9af8"/><path d="M0 8 L8 16 L8 8 Z" fill="#2a44d8"/><path d="M8 4 L12 8 L8 12 L4 8 Z" fill="#2858f0"/><path d="M6 11 H11 V8 L16 12.5 L11 17 V14 H6 Z" fill="#70e030" stroke="#206010" stroke-width="0.6"/></g></svg>
<div style="position:absolute;left:247px;top:389px;font-size:14px;line-height:16px;color:#f4f4f4;white-space:pre;">result</div>
<div style="position:absolute;left:204px;top:410px;width:13px;height:13px;background:linear-gradient(#fff,#dde4ee);border:1px solid #a8b0c0;border-radius:2px"></div>
<svg style="position:absolute;left:204px;top:410px;" width="13" height="13" viewBox="0 0 13 13"><path d="M6.5 3v7M3 6.5h7" stroke="#000" stroke-width="1.4"/></svg>
<div style="position:absolute;left:217px;top:416px;width:8px;height:1px;background:#8890b0"></div>
<svg style="position:absolute;left:223px;top:407px;" width="20" height="20" viewBox="0 0 20 20"><g transform="scale(1.13)"><path d="M8 0 L16 8 L8 16 L0 8 Z" fill="#2a3ac0"/><path d="M8 0 L16 8 L8 8 Z" fill="#3a5ae8"/><path d="M8 0 L0 8 L8 8 Z" fill="#7a9af8"/><path d="M0 8 L8 16 L8 8 Z" fill="#2a44d8"/><path d="M8 4 L12 8 L8 12 L4 8 Z" fill="#2858f0"/></g></svg>
<div style="position:absolute;left:247px;top:409px;font-size:14px;line-height:16px;color:#f4f4f4;white-space:pre;">PC_value</div>
<div style="position:absolute;left:204px;top:430px;width:13px;height:13px;background:linear-gradient(#fff,#dde4ee);border:1px solid #a8b0c0;border-radius:2px"></div>
<svg style="position:absolute;left:204px;top:430px;" width="13" height="13" viewBox="0 0 13 13"><path d="M6.5 3v7M3 6.5h7" stroke="#000" stroke-width="1.4"/></svg>
<div style="position:absolute;left:217px;top:436px;width:8px;height:1px;background:#8890b0"></div>
<svg style="position:absolute;left:223px;top:427px;" width="20" height="20" viewBox="0 0 20 20"><g transform="scale(1.13)"><path d="M8 0 L16 8 L8 16 L0 8 Z" fill="#2a3ac0"/><path d="M8 0 L16 8 L8 8 Z" fill="#3a5ae8"/><path d="M8 0 L0 8 L8 8 Z" fill="#7a9af8"/><path d="M0 8 L8 16 L8 8 Z" fill="#2a44d8"/><path d="M8 4 L12 8 L8 12 L4 8 Z" fill="#2858f0"/></g></svg>
<div style="position:absolute;left:247px;top:429px;font-size:14px;line-height:16px;color:#f4f4f4;white-space:pre;">OP</div>
<div style="position:absolute;left:204px;top:450px;width:13px;height:13px;background:linear-gradient(#fff,#dde4ee);border:1px solid #a8b0c0;border-radius:2px"></div>
<svg style="position:absolute;left:204px;top:450px;" width="13" height="13" viewBox="0 0 13 13"><path d="M6.5 3v7M3 6.5h7" stroke="#000" stroke-width="1.4"/></svg>
<div style="position:absolute;left:217px;top:456px;width:8px;height:1px;background:#8890b0"></div>
<svg style="position:absolute;left:223px;top:447px;" width="20" height="20" viewBox="0 0 20 20"><g transform="scale(1.13)"><path d="M8 0 L16 8 L8 16 L0 8 Z" fill="#2a3ac0"/><path d="M8 0 L16 8 L8 8 Z" fill="#3a5ae8"/><path d="M8 0 L0 8 L8 8 Z" fill="#7a9af8"/><path d="M0 8 L8 16 L8 8 Z" fill="#2a44d8"/><path d="M8 4 L12 8 L8 12 L4 8 Z" fill="#2858f0"/></g></svg>
<div style="position:absolute;left:247px;top:449px;font-size:14px;line-height:16px;color:#000;white-space:pre;">A_addr</div>
<div style="position:absolute;left:204px;top:470px;width:13px;height:13px;background:linear-gradient(#fff,#dde4ee);border:1px solid #a8b0c0;border-radius:2px"></div>
<svg style="position:absolute;left:204px;top:470px;" width="13" height="13" viewBox="0 0 13 13"><path d="M6.5 3v7M3 6.5h7" stroke="#000" stroke-width="1.4"/></svg>
<div style="position:absolute;left:217px;top:476px;width:8px;height:1px;background:#8890b0"></div>
<svg style="position:absolute;left:223px;top:467px;" width="20" height="20" viewBox="0 0 20 20"><g transform="scale(1.13)"><path d="M8 0 L16 8 L8 16 L0 8 Z" fill="#2a3ac0"/><path d="M8 0 L16 8 L8 8 Z" fill="#3a5ae8"/><path d="M8 0 L0 8 L8 8 Z" fill="#7a9af8"/><path d="M0 8 L8 16 L8 8 Z" fill="#2a44d8"/><path d="M8 4 L12 8 L8 12 L4 8 Z" fill="#2858f0"/></g></svg>
<div style="position:absolute;left:247px;top:469px;font-size:14px;line-height:16px;color:#f4f4f4;white-space:pre;">B_addr</div>
<div style="position:absolute;left:204px;top:490px;width:13px;height:13px;background:linear-gradient(#fff,#dde4ee);border:1px solid #a8b0c0;border-radius:2px"></div>
<svg style="position:absolute;left:204px;top:490px;" width="13" height="13" viewBox="0 0 13 13"><path d="M6.5 3v7M3 6.5h7" stroke="#000" stroke-width="1.4"/></svg>
<div style="position:absolute;left:217px;top:496px;width:8px;height:1px;background:#8890b0"></div>
<svg style="position:absolute;left:223px;top:487px;" width="20" height="20" viewBox="0 0 20 20"><g transform="scale(1.13)"><path d="M8 0 L16 8 L8 16 L0 8 Z" fill="#2a3ac0"/><path d="M8 0 L16 8 L8 8 Z" fill="#3a5ae8"/><path d="M8 0 L0 8 L8 8 Z" fill="#7a9af8"/><path d="M0 8 L8 16 L8 8 Z" fill="#2a44d8"/><path d="M8 4 L12 8 L8 12 L4 8 Z" fill="#2858f0"/></g></svg>
<div style="position:absolute;left:247px;top:489px;font-size:14px;line-height:16px;color:#f4f4f4;white-space:pre;">C_addr</div>
<div style="position:absolute;left:204px;top:510px;width:13px;height:13px;background:linear-gradient(#fff,#dde4ee);border:1px solid #a8b0c0;border-radius:2px"></div>
<svg style="position:absolute;left:204px;top:510px;" width="13" height="13" viewBox="0 0 13 13"><path d="M6.5 3v7M3 6.5h7" stroke="#000" stroke-width="1.4"/></svg>
<div style="position:absolute;left:217px;top:516px;width:8px;height:1px;background:#8890b0"></div>
<svg style="position:absolute;left:223px;top:507px;" width="20" height="20" viewBox="0 0 20 20"><g transform="scale(1.13)"><path d="M8 0 L16 8 L8 16 L0 8 Z" fill="#2a3ac0"/><path d="M8 0 L16 8 L8 8 Z" fill="#3a5ae8"/><path d="M8 0 L0 8 L8 8 Z" fill="#7a9af8"/><path d="M0 8 L8 16 L8 8 Z" fill="#2a44d8"/><path d="M8 4 L12 8 L8 12 L4 8 Z" fill="#2858f0"/></g></svg>
<div style="position:absolute;left:247px;top:509px;font-size:14px;line-height:16px;color:#f4f4f4;white-space:pre;">A_data</div>
<div style="position:absolute;left:204px;top:530px;width:13px;height:13px;background:linear-gradient(#fff,#dde4ee);border:1px solid #a8b0c0;border-radius:2px"></div>
<svg style="position:absolute;left:204px;top:530px;" width="13" height="13" viewBox="0 0 13 13"><path d="M6.5 3v7M3 6.5h7" stroke="#000" stroke-width="1.4"/></svg>
<div style="position:absolute;left:217px;top:536px;width:8px;height:1px;background:#8890b0"></div>
<svg style="position:absolute;left:223px;top:527px;" width="20" height="20" viewBox="0 0 20 20"><g transform="scale(1.13)"><path d="M8 0 L16 8 L8 16 L0 8 Z" fill="#2a3ac0"/><path d="M8 0 L16 8 L8 8 Z" fill="#3a5ae8"/><path d="M8 0 L0 8 L8 8 Z" fill="#7a9af8"/><path d="M0 8 L8 16 L8 8 Z" fill="#2a44d8"/><path d="M8 4 L12 8 L8 12 L4 8 Z" fill="#2858f0"/></g></svg>
<div style="position:absolute;left:247px;top:529px;font-size:14px;line-height:16px;color:#f4f4f4;white-space:pre;">B_data</div>
<div style="position:absolute;left:196px;top:553px;width:159px;height:19px;background:#f4f4f4"></div>
<div style="position:absolute;left:196px;top:553px;width:21px;height:19px;background:#f0f0f0;border-top:1px solid #fff;border-left:1px solid #fff;border-right:2px solid #a0a0a0;border-bottom:2px solid #a0a0a0"></div>
<svg style="position:absolute;left:202px;top:557px;" width="10" height="10" viewBox="0 0 10 10"><path d="M7 1 V9 L2 5 Z" fill="#000"/></svg>
<div style="position:absolute;left:217px;top:553px;width:53px;height:19px;background:#f0f0f0;border-top:1px solid #fff;border-left:1px solid #fff;border-right:2px solid #a0a0a0;border-bottom:2px solid #a0a0a0"></div>
<div style="position:absolute;left:334px;top:553px;width:21px;height:19px;background:#f0f0f0;border-top:1px solid #fff;border-left:1px solid #fff;border-right:2px solid #a0a0a0;border-bottom:2px solid #a0a0a0"></div>
<svg style="position:absolute;left:340px;top:557px;" width="10" height="10" viewBox="0 0 10 10"><path d="M3 1 V9 L8 5 Z" fill="#000"/></svg>
<div style="position:absolute;left:194px;top:582px;width:185px;height:277px;background:#f0f0f0;border:1px solid #a8a8a8"></div>
<svg style="position:absolute;left:196px;top:585px;" width="20" height="20" viewBox="0 0 20 20"><polygon points="19.0,10.0 16.0,12.5 16.4,16.4 12.5,16.0 10.0,19.0 7.5,16.0 3.6,16.4 4.0,12.5 1.0,10.0 4.0,7.5 3.6,3.6 7.5,4.0 10.0,1.0 12.5,4.0 16.4,3.6 16.0,7.5" fill="#4a6aa0" stroke="#223" stroke-width="0.8"/><circle cx="10" cy="10" r="2.7" fill="#ddd"/></svg>
<div style="position:absolute;left:219px;top:587px;font-size:14px;line-height:16px;color:#000;white-space:pre;">es (Active)</div>
<div style="position:absolute;left:290px;top:591px;width:22px;height:10px;background-image:radial-gradient(#444 0.8px, transparent 1px);background-size:4px 4px;background-position:0 0"></div>
<div style="position:absolute;left:317px;top:586px;width:16px;height:17px;background:#f0f0f0;border-right:2px solid #a0a0a0;border-bottom:2px solid #a0a0a0;border-top:1px solid #fff;border-left:1px solid #fff"></div>
<div style="position:absolute;left:337px;top:586px;width:16px;height:17px;background:#f0f0f0;border-right:2px solid #a0a0a0;border-bottom:2px solid #a0a0a0;border-top:1px solid #fff;border-left:1px solid #fff"></div>
<div style="position:absolute;left:357px;top:586px;width:18px;height:17px;background:#f0f0f0;border-right:2px solid #a0a0a0;border-bottom:2px solid #a0a0a0;border-top:1px solid #fff;border-left:1px solid #fff"></div>
<svg style="position:absolute;left:319px;top:588px;" width="12" height="12" viewBox="0 0 12 12"><path d="M6 1v10M1 6h10" stroke="#000" stroke-width="2.2"/></svg>
<svg style="position:absolute;left:339px;top:588px;" width="12" height="12" viewBox="0 0 12 12"><rect x="1.5" y="5.5" width="5" height="5" fill="none" stroke="#000" stroke-width="1.6"/><path d="M4 8 L10 2 M6 2h4v4" fill="none" stroke="#000" stroke-width="1.6"/></svg>
<svg style="position:absolute;left:360px;top:588px;" width="12" height="12" viewBox="0 0 12 12"><path d="M1.5 1.5 L10.5 10.5 M10.5 1.5 L1.5 10.5" stroke="#000" stroke-width="1.6"/></svg>
<div style="position:absolute;left:197px;top:607px;width:157px;height:21px;background:#f0f0f0;border-top:1px solid #fff;border-bottom:2px solid #a0a0a0"></div>
<div style="position:absolute;left:211px;top:608px;width:1px;height:19px;background:#a0a0a0"></div>
<svg style="position:absolute;left:200px;top:613px;" width="10" height="10" viewBox="0 0 10 10"><path d="M1 1 H9 L5 8 Z" fill="#555"/></svg>
<div style="position:absolute;left:213px;top:611px;font-size:14px;line-height:16px;color:#000;white-space:pre;">Name</div>
<div style="position:absolute;left:358px;top:607px;width:19px;height:226px;background:#f4f4f4"></div>
<div style="position:absolute;left:358px;top:607px;width:19px;height:20px;background:#f0f0f0;border-top:1px solid #fff;border-left:1px solid #fff;border-right:2px solid #a0a0a0;border-bottom:2px solid #a0a0a0"></div>
<svg style="position:absolute;left:362px;top:614px;" width="10" height="6" viewBox="0 0 10 6"><path d="M1 5 L5 1 L9 5 Z" fill="#000"/></svg>
<div style="position:absolute;left:358px;top:813px;width:19px;height:20px;background:#f0f0f0;border-top:1px solid #fff;border-left:1px solid #fff;border-right:2px solid #a0a0a0;border-bottom:2px solid #a0a0a0"></div>
<svg style="position:absolute;left:362px;top:820px;" width="10" height="6" viewBox="0 0 10 6"><path d="M1 1 L5 5 L9 1 Z" fill="#000"/></svg>
<div style="position:absolute;left:197px;top:628px;width:157px;height:205px;background:#8ca2ff"></div>
<div style="position:absolute;left:196px;top:837px;width:159px;height:19px;background:#f4f4f4"></div>
<div style="position:absolute;left:196px;top:837px;width:21px;height:19px;background:#f0f0f0;border-top:1px solid #fff;border-left:1px solid #fff;border-right:2px solid #a0a0a0;border-bottom:2px solid #a0a0a0"></div>
<svg style="position:absolute;left:202px;top:841px;" width="10" height="10" viewBox="0 0 10 10"><path d="M7 1 V9 L2 5 Z" fill="#000"/></svg>
<div style="position:absolute;left:217px;top:837px;width:24px;height:19px;background:#f0f0f0;border-top:1px solid #fff;border-left:1px solid #fff;border-right:2px solid #a0a0a0;border-bottom:2px solid #a0a0a0"></div>
<div style="position:absolute;left:334px;top:837px;width:21px;height:19px;background:#f0f0f0;border-top:1px solid #fff;border-left:1px solid #fff;border-right:2px solid #a0a0a0;border-bottom:2px solid #a0a0a0"></div>
<svg style="position:absolute;left:340px;top:841px;" width="10" height="10" viewBox="0 0 10 10"><path d="M3 1 V9 L8 5 Z" fill="#000"/></svg>
<div style="position:absolute;left:389px;top:297px;width:1529px;height:530px;background:#f0f0f0;border:1px solid #a8a8a8"></div>
<div style="position:absolute;left:390px;top:298px;width:1527px;height:24px;background:#98b4d4;border-top:1px solid #fff"></div>
<svg style="position:absolute;left:392px;top:301px;" width="18" height="18" viewBox="0 0 18 18"><rect x="0.5" y="0.5" width="17" height="17" fill="#f0f0f0" stroke="#222"/><rect x="1.5" y="1.5" width="15" height="3" fill="#fff"/><rect x="1.5" y="5" width="15" height="11.5" fill="#000"/><path d="M2 9 H4 V7 H8 V9 H11 V7 H14 V9 H16" fill="none" stroke="#20c020" stroke-width="1.2"/><path d="M2 14 H5 V12 H8" fill="none" stroke="#20c020" stroke-width="1.2"/><path d="M6.5 5 V16" stroke="#20d8f0" stroke-width="1.2"/><path d="M9 14.5 H16" stroke="#3040e0" stroke-width="1.5"/></svg>
<div style="position:absolute;left:415px;top:302px;font-size:14px;line-height:16px;color:#000;white-space:pre;">Wave - Default</div>
<div style="position:absolute;left:515px;top:305px;width:657px;height:3px;background:#c2e8f6"></div>
<div style="position:absolute;left:1196px;top:305px;width:656px;height:3px;background:#c2e8f6"></div>
<div style="position:absolute;left:515px;top:308px;width:657px;height:2px;background:#000"></div>
<div style="position:absolute;left:1196px;top:308px;width:656px;height:2px;background:#000"></div>
<div style="position:absolute;left:515px;top:311px;width:657px;height:3px;background:#c2e8f6"></div>
<div style="position:absolute;left:1196px;top:311px;width:656px;height:3px;background:#c2e8f6"></div>
<div style="position:absolute;left:515px;top:314px;width:657px;height:2px;background:#000"></div>
<div style="position:absolute;left:1196px;top:314px;width:656px;height:2px;background:#000"></div>
<div style="position:absolute;left:1173px;top:306px;width:23px;height:12px;background-image:radial-gradient(#000 0.9px, transparent 1.2px);background-size:4px 4px"></div>
<div style="position:absolute;left:1857px;top:301px;width:16px;height:17px;background:#f0f0f0;border-right:2px solid #a0a0a0;border-bottom:2px solid #a0a0a0;border-top:1px solid #fff;border-left:1px solid #fff"></div>
<div style="position:absolute;left:1877px;top:301px;width:16px;height:17px;background:#f0f0f0;border-right:2px solid #a0a0a0;border-bottom:2px solid #a0a0a0;border-top:1px solid #fff;border-left:1px solid #fff"></div>
<div style="position:absolute;left:1897px;top:301px;width:18px;height:17px;background:#f0f0f0;border-right:2px solid #a0a0a0;border-bottom:2px solid #a0a0a0;border-top:1px solid #fff;border-left:1px solid #fff"></div>
<svg style="position:absolute;left:1859px;top:303px;" width="12" height="12" viewBox="0 0 12 12"><path d="M6 1v10M1 6h10" stroke="#000" stroke-width="2.2"/></svg>
<svg style="position:absolute;left:1879px;top:303px;" width="12" height="12" viewBox="0 0 12 12"><rect x="1.5" y="5.5" width="5" height="5" fill="none" stroke="#000" stroke-width="1.6"/><path d="M4 8 L10 2 M6 2h4v4" fill="none" stroke="#000" stroke-width="1.6"/></svg>
<svg style="position:absolute;left:1900px;top:303px;" width="12" height="12" viewBox="0 0 12 12"><path d="M1.5 1.5 L10.5 10.5 M10.5 1.5 L1.5 10.5" stroke="#000" stroke-width="1.6"/></svg>
<div style="position:absolute;left:390px;top:322px;width:1527px;height:2px;background:#d8d8d8"></div>
<div style="position:absolute;left:392px;top:324px;width:198px;height:422px;background:#fff"></div>
<div style="position:absolute;left:392px;top:324px;width:198px;height:23px;background:#808080"></div>
<div style="position:absolute;left:594px;top:324px;width:125px;height:23px;background:#808080"></div>
<div style="position:absolute;left:590px;top:324px;width:4px;height:503px;background:#e8e8e8"></div>
<div style="position:absolute;left:719px;top:324px;width:3px;height:503px;background:#e8e8e8"></div>
<div style="position:absolute;left:392px;top:346px;width:528px;height:4px;background:#f4f4f4"></div>
<svg style="position:absolute;left:405px;top:327px;" width="22" height="20" viewBox="0 0 22 20"><path d="M6 0 L12 4 L6 8 L0 4 Z" fill="#a030e0"/><rect x="10" y="8" width="10" height="10" fill="#20a040"/><circle cx="13" cy="8" r="4.5" fill="#30d8f0"/><path d="M7 6 L14 13 L7 20 L0 13 Z" fill="#1040f0"/></svg>
<svg style="position:absolute;left:429px;top:336px;" width="8" height="5" viewBox="0 0 8 5"><path d="M0 0 H8 L4 4 Z" fill="#000"/></svg>
<div style="position:absolute;left:681px;top:328px;font-size:13.5px;line-height:15.5px;color:#eee;white-space:pre;">Msgs</div>
<div style="position:absolute;left:594px;top:350px;width:125px;height:396px;background:#808080"></div>
<div style="position:absolute;left:402px;top:350px;width:188px;height:396px;background:#808080"></div>
<svg style="position:absolute;left:426px;top:355px;" width="20" height="20" viewBox="0 0 20 20"><g transform="scale(1.13)"><path d="M8 0 L16 8 L8 16 L0 8 Z" fill="#2a3ac0"/><path d="M8 0 L16 8 L8 8 Z" fill="#3a5ae8"/><path d="M8 0 L0 8 L8 8 Z" fill="#7a9af8"/><path d="M0 8 L8 16 L8 8 Z" fill="#2a44d8"/><path d="M8 4 L12 8 L8 12 L4 8 Z" fill="#2858f0"/><path d="M0 11 H5 V8 L10 12.5 L5 17 V14 H0 Z" fill="#70e030" stroke="#206010" stroke-width="0.6"/></g></svg>
<div style="position:absolute;left:452px;top:355px;font-size:13.6px;line-height:15.6px;color:#f0f0f0;white-space:pre;">/cpu/Clk</div>
<div style="position:absolute;left:596px;top:355px;font-size:13.3px;line-height:15.3px;color:#f0f0f0;white-space:pre;">1</div>
<svg style="position:absolute;left:426px;top:376px;" width="20" height="20" viewBox="0 0 20 20"><g transform="scale(1.13)"><path d="M8 0 L16 8 L8 16 L0 8 Z" fill="#2a3ac0"/><path d="M8 0 L16 8 L8 8 Z" fill="#3a5ae8"/><path d="M8 0 L0 8 L8 8 Z" fill="#7a9af8"/><path d="M0 8 L8 16 L8 8 Z" fill="#2a44d8"/><path d="M8 4 L12 8 L8 12 L4 8 Z" fill="#2858f0"/><path d="M0 11 H5 V8 L10 12.5 L5 17 V14 H0 Z" fill="#70e030" stroke="#206010" stroke-width="0.6"/></g></svg>
<div style="position:absolute;left:452px;top:376px;font-size:13.6px;line-height:15.6px;color:#f0f0f0;white-space:pre;">/cpu/Reset</div>
<div style="position:absolute;left:596px;top:376px;font-size:13.3px;line-height:15.3px;color:#f0f0f0;white-space:pre;">0</div>
<div style="position:absolute;left:409px;top:400px;width:13px;height:13px;background:linear-gradient(#fff,#dde4ee);border:1px solid #a8b0c0;border-radius:2px"></div>
<svg style="position:absolute;left:409px;top:400px;" width="13" height="13" viewBox="0 0 13 13"><path d="M6.5 3v7M3 6.5h7" stroke="#000" stroke-width="1.4"/></svg>
<div style="position:absolute;left:422px;top:407px;width:6px;height:1px;background:#ccc"></div>
<svg style="position:absolute;left:426px;top:397px;" width="20" height="20" viewBox="0 0 20 20"><g transform="scale(1.13)"><path d="M8 0 L16 8 L8 16 L0 8 Z" fill="#2a3ac0"/><path d="M8 0 L16 8 L8 8 Z" fill="#3a5ae8"/><path d="M8 0 L0 8 L8 8 Z" fill="#7a9af8"/><path d="M0 8 L8 16 L8 8 Z" fill="#2a44d8"/><path d="M8 4 L12 8 L8 12 L4 8 Z" fill="#2858f0"/><path d="M6 11 H11 V8 L16 12.5 L11 17 V14 H6 Z" fill="#70e030" stroke="#206010" stroke-width="0.6"/></g></svg>
<div style="position:absolute;left:452px;top:398px;font-size:13.6px;line-height:15.6px;color:#f0f0f0;white-space:pre;">/cpu/result</div>
<div style="position:absolute;left:596px;top:398px;font-size:13.3px;line-height:15.3px;color:#f0f0f0;white-space:pre;">00000000</div>
<div style="position:absolute;left:409px;top:422px;width:13px;height:13px;background:linear-gradient(#fff,#dde4ee);border:1px solid #a8b0c0;border-radius:2px"></div>
<svg style="position:absolute;left:409px;top:422px;" width="13" height="13" viewBox="0 0 13 13"><path d="M6.5 3v7M3 6.5h7" stroke="#000" stroke-width="1.4"/></svg>
<div style="position:absolute;left:422px;top:428px;width:6px;height:1px;background:#ccc"></div>
<svg style="position:absolute;left:426px;top:419px;" width="20" height="20" viewBox="0 0 20 20"><g transform="scale(1.13)"><path d="M8 0 L16 8 L8 16 L0 8 Z" fill="#2a3ac0"/><path d="M8 0 L16 8 L8 8 Z" fill="#3a5ae8"/><path d="M8 0 L0 8 L8 8 Z" fill="#7a9af8"/><path d="M0 8 L8 16 L8 8 Z" fill="#2a44d8"/><path d="M8 4 L12 8 L8 12 L4 8 Z" fill="#2858f0"/></g></svg>
<div style="position:absolute;left:452px;top:419px;font-size:13.6px;line-height:15.6px;color:#f0f0f0;white-space:pre;">/cpu/PC_value</div>
<div style="position:absolute;left:596px;top:419px;font-size:13.3px;line-height:15.3px;color:#f0f0f0;white-space:pre;">100</div>
<div style="position:absolute;left:409px;top:443px;width:13px;height:13px;background:linear-gradient(#fff,#dde4ee);border:1px solid #a8b0c0;border-radius:2px"></div>
<svg style="position:absolute;left:409px;top:443px;" width="13" height="13" viewBox="0 0 13 13"><path d="M6.5 3v7M3 6.5h7" stroke="#000" stroke-width="1.4"/></svg>
<div style="position:absolute;left:422px;top:449px;width:6px;height:1px;background:#ccc"></div>
<svg style="position:absolute;left:426px;top:440px;" width="20" height="20" viewBox="0 0 20 20"><g transform="scale(1.13)"><path d="M8 0 L16 8 L8 16 L0 8 Z" fill="#2a3ac0"/><path d="M8 0 L16 8 L8 8 Z" fill="#3a5ae8"/><path d="M8 0 L0 8 L8 8 Z" fill="#7a9af8"/><path d="M0 8 L8 16 L8 8 Z" fill="#2a44d8"/><path d="M8 4 L12 8 L8 12 L4 8 Z" fill="#2858f0"/></g></svg>
<div style="position:absolute;left:452px;top:440px;font-size:13.6px;line-height:15.6px;color:#f0f0f0;white-space:pre;">/cpu/OP</div>
<div style="position:absolute;left:596px;top:440px;font-size:13.3px;line-height:15.3px;color:#f0f0f0;white-space:pre;">100</div>
<div style="position:absolute;left:402px;top:460px;width:188px;height:21px;background:#fff"></div>
<div style="position:absolute;left:594px;top:460px;width:125px;height:21px;background:#fff"></div>
<div style="position:absolute;left:409px;top:464px;width:13px;height:13px;background:linear-gradient(#fff,#dde4ee);border:1px solid #a8b0c0;border-radius:2px"></div>
<svg style="position:absolute;left:409px;top:464px;" width="13" height="13" viewBox="0 0 13 13"><path d="M6.5 3v7M3 6.5h7" stroke="#000" stroke-width="1.4"/></svg>
<div style="position:absolute;left:422px;top:471px;width:6px;height:1px;background:#ccc"></div>
<svg style="position:absolute;left:426px;top:461px;" width="20" height="20" viewBox="0 0 20 20"><g transform="scale(1.13)"><path d="M8 0 L16 8 L8 16 L0 8 Z" fill="#2a3ac0"/><path d="M8 0 L16 8 L8 8 Z" fill="#3a5ae8"/><path d="M8 0 L0 8 L8 8 Z" fill="#7a9af8"/><path d="M0 8 L8 16 L8 8 Z" fill="#2a44d8"/><path d="M8 4 L12 8 L8 12 L4 8 Z" fill="#2858f0"/></g></svg>
<div style="position:absolute;left:452px;top:462px;font-size:13.6px;line-height:15.6px;color:#000;white-space:pre;">/cpu/A_addr</div>
<div style="position:absolute;left:596px;top:462px;font-size:13.3px;line-height:15.3px;color:#000;white-space:pre;">00</div>
<div style="position:absolute;left:409px;top:485px;width:13px;height:13px;background:linear-gradient(#fff,#dde4ee);border:1px solid #a8b0c0;border-radius:2px"></div>
<svg style="position:absolute;left:409px;top:485px;" width="13" height="13" viewBox="0 0 13 13"><path d="M6.5 3v7M3 6.5h7" stroke="#000" stroke-width="1.4"/></svg>
<div style="position:absolute;left:422px;top:492px;width:6px;height:1px;background:#ccc"></div>
<svg style="position:absolute;left:426px;top:482px;" width="20" height="20" viewBox="0 0 20 20"><g transform="scale(1.13)"><path d="M8 0 L16 8 L8 16 L0 8 Z" fill="#2a3ac0"/><path d="M8 0 L16 8 L8 8 Z" fill="#3a5ae8"/><path d="M8 0 L0 8 L8 8 Z" fill="#7a9af8"/><path d="M0 8 L8 16 L8 8 Z" fill="#2a44d8"/><path d="M8 4 L12 8 L8 12 L4 8 Z" fill="#2858f0"/></g></svg>
<div style="position:absolute;left:452px;top:483px;font-size:13.6px;line-height:15.6px;color:#f0f0f0;white-space:pre;">/cpu/B_addr</div>
<div style="position:absolute;left:596px;top:483px;font-size:13.3px;line-height:15.3px;color:#f0f0f0;white-space:pre;">10</div>
<div style="position:absolute;left:409px;top:507px;width:13px;height:13px;background:linear-gradient(#fff,#dde4ee);border:1px solid #a8b0c0;border-radius:2px"></div>
<svg style="position:absolute;left:409px;top:507px;" width="13" height="13" viewBox="0 0 13 13"><path d="M6.5 3v7M3 6.5h7" stroke="#000" stroke-width="1.4"/></svg>
<div style="position:absolute;left:422px;top:513px;width:6px;height:1px;background:#ccc"></div>
<svg style="position:absolute;left:426px;top:504px;" width="20" height="20" viewBox="0 0 20 20"><g transform="scale(1.13)"><path d="M8 0 L16 8 L8 16 L0 8 Z" fill="#2a3ac0"/><path d="M8 0 L16 8 L8 8 Z" fill="#3a5ae8"/><path d="M8 0 L0 8 L8 8 Z" fill="#7a9af8"/><path d="M0 8 L8 16 L8 8 Z" fill="#2a44d8"/><path d="M8 4 L12 8 L8 12 L4 8 Z" fill="#2858f0"/></g></svg>
<div style="position:absolute;left:452px;top:504px;font-size:13.6px;line-height:15.6px;color:#f0f0f0;white-space:pre;">/cpu/C_addr</div>
<div style="position:absolute;left:596px;top:504px;font-size:13.3px;line-height:15.3px;color:#f0f0f0;white-space:pre;">11</div>
<div style="position:absolute;left:409px;top:528px;width:13px;height:13px;background:linear-gradient(#fff,#dde4ee);border:1px solid #a8b0c0;border-radius:2px"></div>
<svg style="position:absolute;left:409px;top:528px;" width="13" height="13" viewBox="0 0 13 13"><path d="M6.5 3v7M3 6.5h7" stroke="#000" stroke-width="1.4"/></svg>
<div style="position:absolute;left:422px;top:534px;width:6px;height:1px;background:#ccc"></div>
<svg style="position:absolute;left:426px;top:525px;" width="20" height="20" viewBox="0 0 20 20"><g transform="scale(1.13)"><path d="M8 0 L16 8 L8 16 L0 8 Z" fill="#2a3ac0"/><path d="M8 0 L16 8 L8 8 Z" fill="#3a5ae8"/><path d="M8 0 L0 8 L8 8 Z" fill="#7a9af8"/><path d="M0 8 L8 16 L8 8 Z" fill="#2a44d8"/><path d="M8 4 L12 8 L8 12 L4 8 Z" fill="#2858f0"/></g></svg>
<div style="position:absolute;left:452px;top:525px;font-size:13.6px;line-height:15.6px;color:#f0f0f0;white-space:pre;">/cpu/A_data</div>
<div style="position:absolute;left:596px;top:525px;font-size:13.3px;line-height:15.3px;color:#f0f0f0;white-space:pre;">00110011</div>
<div style="position:absolute;left:409px;top:549px;width:13px;height:13px;background:linear-gradient(#fff,#dde4ee);border:1px solid #a8b0c0;border-radius:2px"></div>
<svg style="position:absolute;left:409px;top:549px;" width="13" height="13" viewBox="0 0 13 13"><path d="M6.5 3v7M3 6.5h7" stroke="#000" stroke-width="1.4"/></svg>
<div style="position:absolute;left:422px;top:556px;width:6px;height:1px;background:#ccc"></div>
<svg style="position:absolute;left:426px;top:546px;" width="20" height="20" viewBox="0 0 20 20"><g transform="scale(1.13)"><path d="M8 0 L16 8 L8 16 L0 8 Z" fill="#2a3ac0"/><path d="M8 0 L16 8 L8 8 Z" fill="#3a5ae8"/><path d="M8 0 L0 8 L8 8 Z" fill="#7a9af8"/><path d="M0 8 L8 16 L8 8 Z" fill="#2a44d8"/><path d="M8 4 L12 8 L8 12 L4 8 Z" fill="#2858f0"/></g></svg>
<div style="position:absolute;left:452px;top:547px;font-size:13.6px;line-height:15.6px;color:#f0f0f0;white-space:pre;">/cpu/B_data</div>
<div style="position:absolute;left:596px;top:547px;font-size:13.3px;line-height:15.3px;color:#f0f0f0;white-space:pre;">00000000</div>
<div style="position:absolute;left:409px;top:571px;width:13px;height:13px;background:linear-gradient(#fff,#dde4ee);border:1px solid #a8b0c0;border-radius:2px"></div>
<svg style="position:absolute;left:409px;top:571px;" width="13" height="13" viewBox="0 0 13 13"><path d="M6.5 3v7M3 6.5h7" stroke="#000" stroke-width="1.4"/></svg>
<div style="position:absolute;left:422px;top:577px;width:6px;height:1px;background:#ccc"></div>
<svg style="position:absolute;left:426px;top:568px;" width="20" height="20" viewBox="0 0 20 20"><g transform="scale(1.13)"><path d="M8 0 L16 8 L8 16 L0 8 Z" fill="#2a3ac0"/><path d="M8 0 L16 8 L8 8 Z" fill="#3a5ae8"/><path d="M8 0 L0 8 L8 8 Z" fill="#7a9af8"/><path d="M0 8 L8 16 L8 8 Z" fill="#2a44d8"/><path d="M8 4 L12 8 L8 12 L4 8 Z" fill="#2858f0"/></g></svg>
<div style="position:absolute;left:452px;top:568px;font-size:13.6px;line-height:15.6px;color:#f0f0f0;white-space:pre;">/cpu/ALU_result</div>
<div style="position:absolute;left:596px;top:568px;font-size:13.3px;line-height:15.3px;color:#f0f0f0;white-space:pre;">00000000</div>
<div style="position:absolute;left:409px;top:592px;width:13px;height:13px;background:linear-gradient(#fff,#dde4ee);border:1px solid #a8b0c0;border-radius:2px"></div>
<svg style="position:absolute;left:409px;top:592px;" width="13" height="13" viewBox="0 0 13 13"><path d="M6.5 3v7M3 6.5h7" stroke="#000" stroke-width="1.4"/></svg>
<div style="position:absolute;left:422px;top:598px;width:6px;height:1px;background:#ccc"></div>
<svg style="position:absolute;left:426px;top:589px;" width="20" height="20" viewBox="0 0 20 20"><g transform="scale(1.13)"><path d="M8 0 L16 8 L8 16 L0 8 Z" fill="#2a3ac0"/><path d="M8 0 L16 8 L8 8 Z" fill="#3a5ae8"/><path d="M8 0 L0 8 L8 8 Z" fill="#7a9af8"/><path d="M0 8 L8 16 L8 8 Z" fill="#2a44d8"/><path d="M8 4 L12 8 L8 12 L4 8 Z" fill="#2858f0"/></g></svg>
<div style="position:absolute;left:452px;top:589px;font-size:13.6px;line-height:15.6px;color:#f0f0f0;white-space:pre;">/cpu/ALU_opcode</div>
<div style="position:absolute;left:596px;top:589px;font-size:13.3px;line-height:15.3px;color:#f0f0f0;white-space:pre;">100</div>
<svg style="position:absolute;left:426px;top:610px;" width="20" height="20" viewBox="0 0 20 20"><g transform="scale(1.13)"><path d="M8 0 L16 8 L8 16 L0 8 Z" fill="#2a3ac0"/><path d="M8 0 L16 8 L8 8 Z" fill="#3a5ae8"/><path d="M8 0 L0 8 L8 8 Z" fill="#7a9af8"/><path d="M0 8 L8 16 L8 8 Z" fill="#2a44d8"/><path d="M8 4 L12 8 L8 12 L4 8 Z" fill="#2858f0"/></g></svg>
<div style="position:absolute;left:452px;top:611px;font-size:13.6px;line-height:15.6px;color:#f0f0f0;white-space:pre;">/cpu/Write_Enable</div>
<div style="position:absolute;left:596px;top:611px;font-size:13.3px;line-height:15.3px;color:#f0f0f0;white-space:pre;">1</div>
<div style="position:absolute;left:409px;top:634px;width:13px;height:13px;background:linear-gradient(#fff,#dde4ee);border:1px solid #a8b0c0;border-radius:2px"></div>
<svg style="position:absolute;left:409px;top:634px;" width="13" height="13" viewBox="0 0 13 13"><path d="M6.5 3v7M3 6.5h7" stroke="#000" stroke-width="1.4"/></svg>
<div style="position:absolute;left:422px;top:641px;width:6px;height:1px;background:#ccc"></div>
<svg style="position:absolute;left:426px;top:631px;" width="20" height="20" viewBox="0 0 20 20"><g transform="scale(1.13)"><path d="M8 0 L16 8 L8 16 L0 8 Z" fill="#2a3ac0"/><path d="M8 0 L16 8 L8 8 Z" fill="#3a5ae8"/><path d="M8 0 L0 8 L8 8 Z" fill="#7a9af8"/><path d="M0 8 L8 16 L8 8 Z" fill="#2a44d8"/><path d="M8 4 L12 8 L8 12 L4 8 Z" fill="#2858f0"/></g></svg>
<div style="position:absolute;left:452px;top:632px;font-size:13.6px;line-height:15.6px;color:#f0f0f0;white-space:pre;">/cpu/ALU_Op1</div>
<div style="position:absolute;left:596px;top:632px;font-size:13.3px;line-height:15.3px;color:#f0f0f0;white-space:pre;">0011</div>
<div style="position:absolute;left:409px;top:656px;width:13px;height:13px;background:linear-gradient(#fff,#dde4ee);border:1px solid #a8b0c0;border-radius:2px"></div>
<svg style="position:absolute;left:409px;top:656px;" width="13" height="13" viewBox="0 0 13 13"><path d="M6.5 3v7M3 6.5h7" stroke="#000" stroke-width="1.4"/></svg>
<div style="position:absolute;left:422px;top:662px;width:6px;height:1px;background:#ccc"></div>
<svg style="position:absolute;left:426px;top:653px;" width="20" height="20" viewBox="0 0 20 20"><g transform="scale(1.13)"><path d="M8 0 L16 8 L8 16 L0 8 Z" fill="#2a3ac0"/><path d="M8 0 L16 8 L8 8 Z" fill="#3a5ae8"/><path d="M8 0 L0 8 L8 8 Z" fill="#7a9af8"/><path d="M0 8 L8 16 L8 8 Z" fill="#2a44d8"/><path d="M8 4 L12 8 L8 12 L4 8 Z" fill="#2858f0"/></g></svg>
<div style="position:absolute;left:452px;top:653px;font-size:13.6px;line-height:15.6px;color:#f0f0f0;white-space:pre;">/cpu/ALU_Op2</div>
<div style="position:absolute;left:596px;top:653px;font-size:13.3px;line-height:15.3px;color:#f0f0f0;white-space:pre;">0000</div>
<div style="position:absolute;left:405px;top:671px;width:180px;height:2px;background:#222"></div>
<svg style="position:absolute;left:404px;top:667px;" width="6" height="10" viewBox="0 0 6 10"><path d="M1 1 L5 5 L1 9" fill="none" stroke="#222"/></svg>
<div style="position:absolute;left:596px;top:671px;width:118px;height:2px;background:#222"></div>
<svg style="position:absolute;left:722px;top:324px;" width="1168" height="422" viewBox="0 0 1168 422"><rect x="0" y="0" width="1168" height="422" fill="#000"/><rect x="0" y="22" width="1168" height="4" fill="#f4f4f4"/><rect x="61.22" y="26" width="1.5" height="396" fill="#767676"/><rect x="119.19" y="26" width="1.5" height="396" fill="#767676"/><rect x="177.16" y="26" width="1.5" height="396" fill="#767676"/><rect x="235.13" y="26" width="1.5" height="396" fill="#767676"/><rect x="293.10" y="26" width="1.5" height="396" fill="#767676"/><rect x="351.07" y="26" width="1.5" height="396" fill="#767676"/><rect x="409.04" y="26" width="1.5" height="396" fill="#767676"/><rect x="467.01" y="26" width="1.5" height="396" fill="#767676"/><rect x="524.98" y="26" width="1.5" height="396" fill="#767676"/><rect x="582.95" y="26" width="1.5" height="396" fill="#767676"/><rect x="640.92" y="26" width="1.5" height="396" fill="#767676"/><rect x="698.89" y="26" width="1.5" height="396" fill="#767676"/><rect x="756.86" y="26" width="1.5" height="396" fill="#767676"/><rect x="814.83" y="26" width="1.5" height="396" fill="#767676"/><rect x="872.80" y="26" width="1.5" height="396" fill="#767676"/><rect x="930.77" y="26" width="1.5" height="396" fill="#767676"/><rect x="988.74" y="26" width="1.5" height="396" fill="#767676"/><rect x="1046.71" y="26" width="1.5" height="396" fill="#767676"/><rect x="1104.68" y="26" width="1.5" height="396" fill="#767676"/><rect x="1162.65" y="26" width="1.5" height="396" fill="#767676"/><path d="M4.0 39.5 V46.8 H4.0 V46.8 H119.9 V31.8 H235.9 V46.8 H351.8 V31.8 H467.8 V46.8 H583.7 V31.8 H699.6 V46.8 H815.6 V31.8 H931.5" fill="none" stroke="#00c800" stroke-width="1.7"/><path d="M4.0 60.8 V53.1 H4.0 V53.1 H119.9 V68.1 H931.5" fill="none" stroke="#00c800" stroke-width="1.7"/><text x="9.0" y="87.3" fill="#f4f4f4" font-size="13.3" font-family="Liberation Sans">00001000</text><text x="124.9" y="87.3" fill="#f4f4f4" font-size="13.3" font-family="Liberation Sans">00000010</text><text x="356.8" y="87.3" fill="#f4f4f4" font-size="13.3" font-family="Liberation Sans">00001111</text><text x="588.7" y="87.3" fill="#f4f4f4" font-size="13.3" font-family="Liberation Sans">00000000</text><text x="820.6" y="87.3" fill="#f4f4f4" font-size="13.3" font-family="Liberation Sans">00000000</text><path d="M6.0 74.3 H117.9 L119.9 76.3 V87.3 L117.9 89.3 H6.0 L4.0 87.3 V76.3 Z M121.9 74.3 H349.8 L351.8 76.3 V87.3 L349.8 89.3 H121.9 L119.9 87.3 V76.3 Z M353.8 74.3 H581.7 L583.7 76.3 V87.3 L581.7 89.3 H353.8 L351.8 87.3 V76.3 Z M585.7 74.3 H813.6 L815.6 76.3 V87.3 L813.6 89.3 H585.7 L583.7 87.3 V76.3 Z M931.5 74.3 H817.6 L815.6 76.3 V87.3 L817.6 89.3 H931.5 " fill="none" stroke="#a0e0a0" stroke-width="1.5"/><text x="9.0" y="108.6" fill="#f4f4f4" font-size="13.3" font-family="Liberation Sans">000</text><text x="124.9" y="108.6" fill="#f4f4f4" font-size="13.3" font-family="Liberation Sans">001</text><text x="356.8" y="108.6" fill="#f4f4f4" font-size="13.3" font-family="Liberation Sans">010</text><text x="588.7" y="108.6" fill="#f4f4f4" font-size="13.3" font-family="Liberation Sans">011</text><text x="820.6" y="108.6" fill="#f4f4f4" font-size="13.3" font-family="Liberation Sans">100</text><path d="M6.0 95.6 H117.9 L119.9 97.6 V108.6 L117.9 110.6 H6.0 L4.0 108.6 V97.6 Z M121.9 95.6 H349.8 L351.8 97.6 V108.6 L349.8 110.6 H121.9 L119.9 108.6 V97.6 Z M353.8 95.6 H581.7 L583.7 97.6 V108.6 L581.7 110.6 H353.8 L351.8 108.6 V97.6 Z M585.7 95.6 H813.6 L815.6 97.6 V108.6 L813.6 110.6 H585.7 L583.7 108.6 V97.6 Z M931.5 95.6 H817.6 L815.6 97.6 V108.6 L817.6 110.6 H931.5 " fill="none" stroke="#a0e0a0" stroke-width="1.5"/><text x="9.0" y="129.9" fill="#f4f4f4" font-size="13.3" font-family="Liberation Sans">000</text><text x="124.9" y="129.9" fill="#f4f4f4" font-size="13.3" font-family="Liberation Sans">001</text><text x="356.8" y="129.9" fill="#f4f4f4" font-size="13.3" font-family="Liberation Sans">010</text><text x="588.7" y="129.9" fill="#f4f4f4" font-size="13.3" font-family="Liberation Sans">011</text><text x="820.6" y="129.9" fill="#f4f4f4" font-size="13.3" font-family="Liberation Sans">100</text><path d="M6.0 116.9 H117.9 L119.9 118.9 V129.9 L117.9 131.9 H6.0 L4.0 129.9 V118.9 Z M121.9 116.9 H349.8 L351.8 118.9 V129.9 L349.8 131.9 H121.9 L119.9 129.9 V118.9 Z M353.8 116.9 H581.7 L583.7 118.9 V129.9 L581.7 131.9 H353.8 L351.8 129.9 V118.9 Z M585.7 116.9 H813.6 L815.6 118.9 V129.9 L813.6 131.9 H585.7 L583.7 129.9 V118.9 Z M931.5 116.9 H817.6 L815.6 118.9 V129.9 L817.6 131.9 H931.5 " fill="none" stroke="#a0e0a0" stroke-width="1.5"/><text x="9.0" y="151.1" fill="#f4f4f4" font-size="13.3" font-family="Liberation Sans">01</text><text x="124.9" y="151.1" fill="#f4f4f4" font-size="13.3" font-family="Liberation Sans">10</text><text x="356.8" y="151.1" fill="#f4f4f4" font-size="13.3" font-family="Liberation Sans">00</text><text x="588.7" y="151.1" fill="#f4f4f4" font-size="13.3" font-family="Liberation Sans">10</text><text x="820.6" y="151.1" fill="#f4f4f4" font-size="13.3" font-family="Liberation Sans">00</text><path d="M6.0 138.1 H117.9 L119.9 140.1 V151.1 L117.9 153.1 H6.0 L4.0 151.1 V140.1 Z M121.9 138.1 H349.8 L351.8 140.1 V151.1 L349.8 153.1 H121.9 L119.9 151.1 V140.1 Z M353.8 138.1 H581.7 L583.7 140.1 V151.1 L581.7 153.1 H353.8 L351.8 151.1 V140.1 Z M585.7 138.1 H813.6 L815.6 140.1 V151.1 L813.6 153.1 H585.7 L583.7 151.1 V140.1 Z M931.5 138.1 H817.6 L815.6 140.1 V151.1 L817.6 153.1 H931.5 " fill="none" stroke="#a0e0a0" stroke-width="1.5"/><text x="9.0" y="172.4" fill="#f4f4f4" font-size="13.3" font-family="Liberation Sans">01</text><text x="124.9" y="172.4" fill="#f4f4f4" font-size="13.3" font-family="Liberation Sans">00</text><text x="356.8" y="172.4" fill="#f4f4f4" font-size="13.3" font-family="Liberation Sans">10</text><text x="588.7" y="172.4" fill="#f4f4f4" font-size="13.3" font-family="Liberation Sans">01</text><text x="820.6" y="172.4" fill="#f4f4f4" font-size="13.3" font-family="Liberation Sans">10</text><path d="M6.0 159.4 H117.9 L119.9 161.4 V172.4 L117.9 174.4 H6.0 L4.0 172.4 V161.4 Z M121.9 159.4 H349.8 L351.8 161.4 V172.4 L349.8 174.4 H121.9 L119.9 172.4 V161.4 Z M353.8 159.4 H581.7 L583.7 161.4 V172.4 L581.7 174.4 H353.8 L351.8 172.4 V161.4 Z M585.7 159.4 H813.6 L815.6 161.4 V172.4 L813.6 174.4 H585.7 L583.7 172.4 V161.4 Z M931.5 159.4 H817.6 L815.6 161.4 V172.4 L817.6 174.4 H931.5 " fill="none" stroke="#a0e0a0" stroke-width="1.5"/><text x="9.0" y="193.7" fill="#f4f4f4" font-size="13.3" font-family="Liberation Sans">00</text><text x="124.9" y="193.7" fill="#f4f4f4" font-size="13.3" font-family="Liberation Sans">11</text><text x="356.8" y="193.7" fill="#f4f4f4" font-size="13.3" font-family="Liberation Sans">01</text><text x="588.7" y="193.7" fill="#f4f4f4" font-size="13.3" font-family="Liberation Sans">10</text><text x="820.6" y="193.7" fill="#f4f4f4" font-size="13.3" font-family="Liberation Sans">11</text><path d="M6.0 180.7 H117.9 L119.9 182.7 V193.7 L117.9 195.7 H6.0 L4.0 193.7 V182.7 Z M121.9 180.7 H349.8 L351.8 182.7 V193.7 L349.8 195.7 H121.9 L119.9 193.7 V182.7 Z M353.8 180.7 H581.7 L583.7 182.7 V193.7 L581.7 195.7 H353.8 L351.8 193.7 V182.7 Z M585.7 180.7 H813.6 L815.6 182.7 V193.7 L813.6 195.7 H585.7 L583.7 193.7 V182.7 Z M931.5 180.7 H817.6 L815.6 182.7 V193.7 L817.6 195.7 H931.5 " fill="none" stroke="#a0e0a0" stroke-width="1.5"/><text x="9.0" y="215.0" fill="#f4f4f4" font-size="13.3" font-family="Liberation Sans">11001100</text><text x="124.9" y="215.0" fill="#f4f4f4" font-size="13.3" font-family="Liberation Sans">01010101</text><text x="356.8" y="215.0" fill="#f4f4f4" font-size="13.3" font-family="Liberation Sans">00110011</text><text x="588.7" y="215.0" fill="#f4f4f4" font-size="13.3" font-family="Liberation Sans">01010101</text><text x="820.6" y="215.0" fill="#f4f4f4" font-size="13.3" font-family="Liberation Sans">00110011</text><path d="M6.0 202.0 H117.9 L119.9 204.0 V215.0 L117.9 217.0 H6.0 L4.0 215.0 V204.0 Z M121.9 202.0 H349.8 L351.8 204.0 V215.0 L349.8 217.0 H121.9 L119.9 215.0 V204.0 Z M353.8 202.0 H581.7 L583.7 204.0 V215.0 L581.7 217.0 H353.8 L351.8 215.0 V204.0 Z M585.7 202.0 H813.6 L815.6 204.0 V215.0 L813.6 217.0 H585.7 L583.7 215.0 V204.0 Z M931.5 202.0 H817.6 L815.6 204.0 V215.0 L817.6 217.0 H931.5 " fill="none" stroke="#a0e0a0" stroke-width="1.5"/><text x="9.0" y="236.3" fill="#f4f4f4" font-size="13.3" font-family="Liberation Sans">11001100</text><text x="124.9" y="236.3" fill="#f4f4f4" font-size="13.3" font-family="Liberation Sans">00110011</text><text x="356.8" y="236.3" fill="#f4f4f4" font-size="13.3" font-family="Liberation Sans">01010101</text><text x="588.7" y="236.3" fill="#f4f4f4" font-size="13.3" font-family="Liberation Sans">00001111</text><text x="820.6" y="236.3" fill="#f4f4f4" font-size="13.3" font-family="Liberation Sans">00000000</text><path d="M6.0 223.3 H117.9 L119.9 225.3 V236.3 L117.9 238.3 H6.0 L4.0 236.3 V225.3 Z M121.9 223.3 H349.8 L351.8 225.3 V236.3 L349.8 238.3 H121.9 L119.9 236.3 V225.3 Z M353.8 223.3 H581.7 L583.7 225.3 V236.3 L581.7 238.3 H353.8 L351.8 236.3 V225.3 Z M585.7 223.3 H813.6 L815.6 225.3 V236.3 L813.6 238.3 H585.7 L583.7 236.3 V225.3 Z M931.5 223.3 H817.6 L815.6 225.3 V236.3 L817.6 238.3 H931.5 " fill="none" stroke="#a0e0a0" stroke-width="1.5"/><text x="9.0" y="257.6" fill="#f4f4f4" font-size="13.3" font-family="Liberation Sans">00001000</text><text x="124.9" y="257.6" fill="#f4f4f4" font-size="13.3" font-family="Liberation Sans">00000010</text><text x="356.8" y="257.6" fill="#f4f4f4" font-size="13.3" font-family="Liberation Sans">00001111</text><text x="588.7" y="257.6" fill="#f4f4f4" font-size="13.3" font-family="Liberation Sans">00000000</text><text x="820.6" y="257.6" fill="#f4f4f4" font-size="13.3" font-family="Liberation Sans">00000000</text><path d="M6.0 244.6 H117.9 L119.9 246.6 V257.6 L117.9 259.6 H6.0 L4.0 257.6 V246.6 Z M121.9 244.6 H349.8 L351.8 246.6 V257.6 L349.8 259.6 H121.9 L119.9 257.6 V246.6 Z M353.8 244.6 H581.7 L583.7 246.6 V257.6 L581.7 259.6 H353.8 L351.8 257.6 V246.6 Z M585.7 244.6 H813.6 L815.6 246.6 V257.6 L813.6 259.6 H585.7 L583.7 257.6 V246.6 Z M931.5 244.6 H817.6 L815.6 246.6 V257.6 L817.6 259.6 H931.5 " fill="none" stroke="#a0e0a0" stroke-width="1.5"/><text x="9.0" y="278.9" fill="#f4f4f4" font-size="13.3" font-family="Liberation Sans">000</text><text x="124.9" y="278.9" fill="#f4f4f4" font-size="13.3" font-family="Liberation Sans">001</text><text x="356.8" y="278.9" fill="#f4f4f4" font-size="13.3" font-family="Liberation Sans">010</text><text x="588.7" y="278.9" fill="#f4f4f4" font-size="13.3" font-family="Liberation Sans">011</text><text x="820.6" y="278.9" fill="#f4f4f4" font-size="13.3" font-family="Liberation Sans">100</text><path d="M6.0 265.9 H117.9 L119.9 267.9 V278.9 L117.9 280.9 H6.0 L4.0 278.9 V267.9 Z M121.9 265.9 H349.8 L351.8 267.9 V278.9 L349.8 280.9 H121.9 L119.9 278.9 V267.9 Z M353.8 265.9 H581.7 L583.7 267.9 V278.9 L581.7 280.9 H353.8 L351.8 278.9 V267.9 Z M585.7 265.9 H813.6 L815.6 267.9 V278.9 L813.6 280.9 H585.7 L583.7 278.9 V267.9 Z M931.5 265.9 H817.6 L815.6 267.9 V278.9 L817.6 280.9 H931.5 " fill="none" stroke="#a0e0a0" stroke-width="1.5"/><text x="9.0" y="321.5" fill="#f4f4f4" font-size="13.3" font-family="Liberation Sans">1100</text><text x="124.9" y="321.5" fill="#f4f4f4" font-size="13.3" font-family="Liberation Sans">0101</text><text x="356.8" y="321.5" fill="#f4f4f4" font-size="13.3" font-family="Liberation Sans">0011</text><text x="588.7" y="321.5" fill="#f4f4f4" font-size="13.3" font-family="Liberation Sans">0101</text><text x="820.6" y="321.5" fill="#f4f4f4" font-size="13.3" font-family="Liberation Sans">0011</text><path d="M6.0 308.5 H117.9 L119.9 310.5 V321.5 L117.9 323.5 H6.0 L4.0 321.5 V310.5 Z M121.9 308.5 H349.8 L351.8 310.5 V321.5 L349.8 323.5 H121.9 L119.9 321.5 V310.5 Z M353.8 308.5 H581.7 L583.7 310.5 V321.5 L581.7 323.5 H353.8 L351.8 321.5 V310.5 Z M585.7 308.5 H813.6 L815.6 310.5 V321.5 L813.6 323.5 H585.7 L583.7 321.5 V310.5 Z M931.5 308.5 H817.6 L815.6 310.5 V321.5 L817.6 323.5 H931.5 " fill="none" stroke="#a0e0a0" stroke-width="1.5"/><text x="9.0" y="342.8" fill="#f4f4f4" font-size="13.3" font-family="Liberation Sans">1100</text><text x="124.9" y="342.8" fill="#f4f4f4" font-size="13.3" font-family="Liberation Sans">0011</text><text x="356.8" y="342.8" fill="#f4f4f4" font-size="13.3" font-family="Liberation Sans">0101</text><text x="588.7" y="342.8" fill="#f4f4f4" font-size="13.3" font-family="Liberation Sans">1111</text><text x="820.6" y="342.8" fill="#f4f4f4" font-size="13.3" font-family="Liberation Sans">0000</text><path d="M6.0 329.8 H117.9 L119.9 331.8 V342.8 L117.9 344.8 H6.0 L4.0 342.8 V331.8 Z M121.9 329.8 H349.8 L351.8 331.8 V342.8 L349.8 344.8 H121.9 L119.9 342.8 V331.8 Z M353.8 329.8 H581.7 L583.7 331.8 V342.8 L581.7 344.8 H353.8 L351.8 342.8 V331.8 Z M585.7 329.8 H813.6 L815.6 331.8 V342.8 L813.6 344.8 H585.7 L583.7 342.8 V331.8 Z M931.5 329.8 H817.6 L815.6 331.8 V342.8 L817.6 344.8 H931.5 " fill="none" stroke="#a0e0a0" stroke-width="1.5"/><path d="M4.0 295.0 V302.3 H4.0 V302.3 H119.9 V287.3 H931.5" fill="none" stroke="#00c800" stroke-width="1.7"/><rect x="861.6" y="0" width="3" height="422" fill="#f0c800"/><rect x="0" y="22" width="1168" height="4" fill="#f4f4f4"/><rect x="0" y="26" width="1168" height="1" fill="#505050"/></svg>
<div style="position:absolute;left:1890px;top:324px;width:4px;height:503px;background:#e8e8e8"></div>
<div style="position:absolute;left:1894px;top:324px;width:22px;height:23px;background:#808080"></div>
<div style="position:absolute;left:1894px;top:346px;width:22px;height:4px;background:#f4f4f4"></div>
<div style="position:absolute;left:1895px;top:351px;width:21px;height:395px;background:#f4f4f4"></div>
<div style="position:absolute;left:1895px;top:351px;width:21px;height:20px;background:#f0f0f0;border-top:1px solid #fff;border-left:1px solid #fff;border-right:2px solid #a0a0a0;border-bottom:2px solid #a0a0a0"></div>
<svg style="position:absolute;left:1900px;top:358px;" width="10" height="6" viewBox="0 0 10 6"><path d="M1 5 L5 1 L9 5 Z" fill="#000"/></svg>
<div style="position:absolute;left:1895px;top:371px;width:21px;height:355px;background:#f0f0f0;border-top:1px solid #fff;border-left:1px solid #fff;border-right:2px solid #a0a0a0;border-bottom:2px solid #a0a0a0"></div>
<div style="position:absolute;left:1895px;top:726px;width:21px;height:20px;background:#f0f0f0;border-top:1px solid #fff;border-left:1px solid #fff;border-right:2px solid #a0a0a0;border-bottom:2px solid #a0a0a0"></div>
<svg style="position:absolute;left:1900px;top:733px;" width="10" height="6" viewBox="0 0 10 6"><path d="M1 1 L5 5 L9 1 Z" fill="#000"/></svg>
<div style="position:absolute;left:392px;top:746px;width:528px;height:3px;background:#f0f0f0"></div>
<div style="position:absolute;left:392px;top:749px;width:198px;height:48px;background:#808080"></div>
<div style="position:absolute;left:594px;top:749px;width:125px;height:48px;background:#808080"></div>
<div style="position:absolute;left:452px;top:775px;width:138px;height:22px;background:#fff"></div>
<div style="position:absolute;left:594px;top:775px;width:125px;height:22px;background:#fff"></div>
<div style="position:absolute;left:548px;top:755px;font-size:13.5px;line-height:15.5px;color:#eee;white-space:pre;">Now</div>
<div style="position:absolute;left:666px;top:755px;font-size:13.5px;line-height:15.5px;color:#eee;white-space:pre;">800 ps</div>
<div style="position:absolute;left:526px;top:779px;font-size:13.5px;line-height:15.5px;color:#000;white-space:pre;">Cursor 1</div>
<div style="position:absolute;left:666px;top:779px;font-size:13.5px;line-height:15.5px;color:#000;white-space:pre;">741 ps</div>
<svg style="position:absolute;left:403px;top:754px;" width="46" height="16" viewBox="0 0 46 16"><path d="M2 12 L6 4 L10 12 Z" fill="#9098b0"/><path d="M1 13 H12" stroke="#5080e0" stroke-width="2"/><rect x="15" y="3" width="13" height="10" fill="#c8d4f0" stroke="#6080c0"/><path d="M17 6h9M17 9h9" stroke="#6080c0"/><circle cx="37" cy="8" r="6" fill="#60c060"/><path d="M37 5v6M34 8h6" stroke="#fff" stroke-width="2"/></svg>
<svg style="position:absolute;left:405px;top:778px;" width="46" height="18" viewBox="0 0 46 18"><rect x="1" y="8" width="11" height="8" fill="#e8c840" stroke="#a08020"/><path d="M3 8 V5 a3.5 3.5 0 0 1 7 0 V8" fill="none" stroke="#999" stroke-width="1.5"/><path d="M16 15 L24 7" stroke="#5080e0" stroke-width="3"/><circle cx="25" cy="5" r="3" fill="none" stroke="#6090e0" stroke-width="1.5"/><circle cx="39" cy="9" r="6" fill="#e05050"/><path d="M36 9h6" stroke="#fff" stroke-width="2"/></svg>
<svg style="position:absolute;left:722px;top:749px;overflow:hidden" width="1168" height="48" viewBox="0 0 1168 48"><rect x="0" y="0" width="1168" height="48" fill="#000"/><rect x="3.5" y="0" width="1.3" height="10" fill="#00d000"/><rect x="9.3" y="4" width="1.3" height="6" fill="#00d000"/><rect x="15.1" y="4" width="1.3" height="6" fill="#00d000"/><rect x="20.9" y="4" width="1.3" height="6" fill="#00d000"/><rect x="26.7" y="4" width="1.3" height="6" fill="#00d000"/><rect x="32.5" y="4" width="1.3" height="6" fill="#00d000"/><rect x="38.3" y="4" width="1.3" height="6" fill="#00d000"/><rect x="44.1" y="4" width="1.3" height="6" fill="#00d000"/><rect x="49.9" y="4" width="1.3" height="6" fill="#00d000"/><rect x="55.7" y="4" width="1.3" height="6" fill="#00d000"/><rect x="61.5" y="0" width="1.3" height="10" fill="#00d000"/><rect x="67.3" y="4" width="1.3" height="6" fill="#00d000"/><rect x="73.1" y="4" width="1.3" height="6" fill="#00d000"/><rect x="78.9" y="4" width="1.3" height="6" fill="#00d000"/><rect x="84.7" y="4" width="1.3" height="6" fill="#00d000"/><rect x="90.5" y="4" width="1.3" height="6" fill="#00d000"/><rect x="96.3" y="4" width="1.3" height="6" fill="#00d000"/><rect x="102.0" y="4" width="1.3" height="6" fill="#00d000"/><rect x="107.8" y="4" width="1.3" height="6" fill="#00d000"/><rect x="113.6" y="4" width="1.3" height="6" fill="#00d000"/><rect x="119.4" y="0" width="1.3" height="10" fill="#00d000"/><rect x="125.2" y="4" width="1.3" height="6" fill="#00d000"/><rect x="131.0" y="4" width="1.3" height="6" fill="#00d000"/><rect x="136.8" y="4" width="1.3" height="6" fill="#00d000"/><rect x="142.6" y="4" width="1.3" height="6" fill="#00d000"/><rect x="148.4" y="4" width="1.3" height="6" fill="#00d000"/><rect x="154.2" y="4" width="1.3" height="6" fill="#00d000"/><rect x="160.0" y="4" width="1.3" height="6" fill="#00d000"/><rect x="165.8" y="4" width="1.3" height="6" fill="#00d000"/><rect x="171.6" y="4" width="1.3" height="6" fill="#00d000"/><rect x="177.4" y="0" width="1.3" height="10" fill="#00d000"/><rect x="183.2" y="4" width="1.3" height="6" fill="#00d000"/><rect x="189.0" y="4" width="1.3" height="6" fill="#00d000"/><rect x="194.8" y="4" width="1.3" height="6" fill="#00d000"/><rect x="200.6" y="4" width="1.3" height="6" fill="#00d000"/><rect x="206.4" y="4" width="1.3" height="6" fill="#00d000"/><rect x="212.2" y="4" width="1.3" height="6" fill="#00d000"/><rect x="218.0" y="4" width="1.3" height="6" fill="#00d000"/><rect x="223.8" y="4" width="1.3" height="6" fill="#00d000"/><rect x="229.6" y="4" width="1.3" height="6" fill="#00d000"/><rect x="235.4" y="0" width="1.3" height="10" fill="#00d000"/><rect x="241.2" y="4" width="1.3" height="6" fill="#00d000"/><rect x="247.0" y="4" width="1.3" height="6" fill="#00d000"/><rect x="252.8" y="4" width="1.3" height="6" fill="#00d000"/><rect x="258.6" y="4" width="1.3" height="6" fill="#00d000"/><rect x="264.4" y="4" width="1.3" height="6" fill="#00d000"/><rect x="270.2" y="4" width="1.3" height="6" fill="#00d000"/><rect x="276.0" y="4" width="1.3" height="6" fill="#00d000"/><rect x="281.8" y="4" width="1.3" height="6" fill="#00d000"/><rect x="287.6" y="4" width="1.3" height="6" fill="#00d000"/><rect x="293.4" y="0" width="1.3" height="10" fill="#00d000"/><rect x="299.1" y="4" width="1.3" height="6" fill="#00d000"/><rect x="304.9" y="4" width="1.3" height="6" fill="#00d000"/><rect x="310.7" y="4" width="1.3" height="6" fill="#00d000"/><rect x="316.5" y="4" width="1.3" height="6" fill="#00d000"/><rect x="322.3" y="4" width="1.3" height="6" fill="#00d000"/><rect x="328.1" y="4" width="1.3" height="6" fill="#00d000"/><rect x="333.9" y="4" width="1.3" height="6" fill="#00d000"/><rect x="339.7" y="4" width="1.3" height="6" fill="#00d000"/><rect x="345.5" y="4" width="1.3" height="6" fill="#00d000"/><rect x="351.3" y="0" width="1.3" height="10" fill="#00d000"/><rect x="357.1" y="4" width="1.3" height="6" fill="#00d000"/><rect x="362.9" y="4" width="1.3" height="6" fill="#00d000"/><rect x="368.7" y="4" width="1.3" height="6" fill="#00d000"/><rect x="374.5" y="4" width="1.3" height="6" fill="#00d000"/><rect x="380.3" y="4" width="1.3" height="6" fill="#00d000"/><rect x="386.1" y="4" width="1.3" height="6" fill="#00d000"/><rect x="391.9" y="4" width="1.3" height="6" fill="#00d000"/><rect x="397.7" y="4" width="1.3" height="6" fill="#00d000"/><rect x="403.5" y="4" width="1.3" height="6" fill="#00d000"/><rect x="409.3" y="0" width="1.3" height="10" fill="#00d000"/><rect x="415.1" y="4" width="1.3" height="6" fill="#00d000"/><rect x="420.9" y="4" width="1.3" height="6" fill="#00d000"/><rect x="426.7" y="4" width="1.3" height="6" fill="#00d000"/><rect x="432.5" y="4" width="1.3" height="6" fill="#00d000"/><rect x="438.3" y="4" width="1.3" height="6" fill="#00d000"/><rect x="444.1" y="4" width="1.3" height="6" fill="#00d000"/><rect x="449.9" y="4" width="1.3" height="6" fill="#00d000"/><rect x="455.7" y="4" width="1.3" height="6" fill="#00d000"/><rect x="461.5" y="4" width="1.3" height="6" fill="#00d000"/><rect x="467.3" y="0" width="1.3" height="10" fill="#00d000"/><rect x="473.1" y="4" width="1.3" height="6" fill="#00d000"/><rect x="478.9" y="4" width="1.3" height="6" fill="#00d000"/><rect x="484.7" y="4" width="1.3" height="6" fill="#00d000"/><rect x="490.4" y="4" width="1.3" height="6" fill="#00d000"/><rect x="496.2" y="4" width="1.3" height="6" fill="#00d000"/><rect x="502.0" y="4" width="1.3" height="6" fill="#00d000"/><rect x="507.8" y="4" width="1.3" height="6" fill="#00d000"/><rect x="513.6" y="4" width="1.3" height="6" fill="#00d000"/><rect x="519.4" y="4" width="1.3" height="6" fill="#00d000"/><rect x="525.2" y="0" width="1.3" height="10" fill="#00d000"/><rect x="531.0" y="4" width="1.3" height="6" fill="#00d000"/><rect x="536.8" y="4" width="1.3" height="6" fill="#00d000"/><rect x="542.6" y="4" width="1.3" height="6" fill="#00d000"/><rect x="548.4" y="4" width="1.3" height="6" fill="#00d000"/><rect x="554.2" y="4" width="1.3" height="6" fill="#00d000"/><rect x="560.0" y="4" width="1.3" height="6" fill="#00d000"/><rect x="565.8" y="4" width="1.3" height="6" fill="#00d000"/><rect x="571.6" y="4" width="1.3" height="6" fill="#00d000"/><rect x="577.4" y="4" width="1.3" height="6" fill="#00d000"/><rect x="583.2" y="0" width="1.3" height="10" fill="#00d000"/><rect x="589.0" y="4" width="1.3" height="6" fill="#00d000"/><rect x="594.8" y="4" width="1.3" height="6" fill="#00d000"/><rect x="600.6" y="4" width="1.3" height="6" fill="#00d000"/><rect x="606.4" y="4" width="1.3" height="6" fill="#00d000"/><rect x="612.2" y="4" width="1.3" height="6" fill="#00d000"/><rect x="618.0" y="4" width="1.3" height="6" fill="#00d000"/><rect x="623.8" y="4" width="1.3" height="6" fill="#00d000"/><rect x="629.6" y="4" width="1.3" height="6" fill="#00d000"/><rect x="635.4" y="4" width="1.3" height="6" fill="#00d000"/><rect x="641.2" y="0" width="1.3" height="10" fill="#00d000"/><rect x="647.0" y="4" width="1.3" height="6" fill="#00d000"/><rect x="652.8" y="4" width="1.3" height="6" fill="#00d000"/><rect x="658.6" y="4" width="1.3" height="6" fill="#00d000"/><rect x="664.4" y="4" width="1.3" height="6" fill="#00d000"/><rect x="670.2" y="4" width="1.3" height="6" fill="#00d000"/><rect x="676.0" y="4" width="1.3" height="6" fill="#00d000"/><rect x="681.7" y="4" width="1.3" height="6" fill="#00d000"/><rect x="687.5" y="4" width="1.3" height="6" fill="#00d000"/><rect x="693.3" y="4" width="1.3" height="6" fill="#00d000"/><rect x="699.1" y="0" width="1.3" height="10" fill="#00d000"/><rect x="704.9" y="4" width="1.3" height="6" fill="#00d000"/><rect x="710.7" y="4" width="1.3" height="6" fill="#00d000"/><rect x="716.5" y="4" width="1.3" height="6" fill="#00d000"/><rect x="722.3" y="4" width="1.3" height="6" fill="#00d000"/><rect x="728.1" y="4" width="1.3" height="6" fill="#00d000"/><rect x="733.9" y="4" width="1.3" height="6" fill="#00d000"/><rect x="739.7" y="4" width="1.3" height="6" fill="#00d000"/><rect x="745.5" y="4" width="1.3" height="6" fill="#00d000"/><rect x="751.3" y="4" width="1.3" height="6" fill="#00d000"/><rect x="757.1" y="0" width="1.3" height="10" fill="#00d000"/><rect x="762.9" y="4" width="1.3" height="6" fill="#00d000"/><rect x="768.7" y="4" width="1.3" height="6" fill="#00d000"/><rect x="774.5" y="4" width="1.3" height="6" fill="#00d000"/><rect x="780.3" y="4" width="1.3" height="6" fill="#00d000"/><rect x="786.1" y="4" width="1.3" height="6" fill="#00d000"/><rect x="791.9" y="4" width="1.3" height="6" fill="#00d000"/><rect x="797.7" y="4" width="1.3" height="6" fill="#00d000"/><rect x="803.5" y="4" width="1.3" height="6" fill="#00d000"/><rect x="809.3" y="4" width="1.3" height="6" fill="#00d000"/><rect x="815.1" y="0" width="1.3" height="10" fill="#00d000"/><rect x="820.9" y="4" width="1.3" height="6" fill="#00d000"/><rect x="826.7" y="4" width="1.3" height="6" fill="#00d000"/><rect x="832.5" y="4" width="1.3" height="6" fill="#00d000"/><rect x="838.3" y="4" width="1.3" height="6" fill="#00d000"/><rect x="844.1" y="4" width="1.3" height="6" fill="#00d000"/><rect x="849.9" y="4" width="1.3" height="6" fill="#00d000"/><rect x="855.7" y="4" width="1.3" height="6" fill="#00d000"/><rect x="861.5" y="4" width="1.3" height="6" fill="#00d000"/><rect x="867.3" y="4" width="1.3" height="6" fill="#00d000"/><rect x="873.0" y="0" width="1.3" height="10" fill="#00d000"/><rect x="878.8" y="4" width="1.3" height="6" fill="#00d000"/><rect x="884.6" y="4" width="1.3" height="6" fill="#00d000"/><rect x="890.4" y="4" width="1.3" height="6" fill="#00d000"/><rect x="896.2" y="4" width="1.3" height="6" fill="#00d000"/><rect x="902.0" y="4" width="1.3" height="6" fill="#00d000"/><rect x="907.8" y="4" width="1.3" height="6" fill="#00d000"/><rect x="913.6" y="4" width="1.3" height="6" fill="#00d000"/><rect x="919.4" y="4" width="1.3" height="6" fill="#00d000"/><rect x="925.2" y="4" width="1.3" height="6" fill="#00d000"/><rect x="931.0" y="0" width="1.3" height="10" fill="#00d000"/><rect x="936.8" y="4" width="1.3" height="6" fill="#00d000"/><rect x="942.6" y="4" width="1.3" height="6" fill="#00d000"/><rect x="948.4" y="4" width="1.3" height="6" fill="#00d000"/><rect x="954.2" y="4" width="1.3" height="6" fill="#00d000"/><rect x="960.0" y="4" width="1.3" height="6" fill="#00d000"/><rect x="965.8" y="4" width="1.3" height="6" fill="#00d000"/><rect x="971.6" y="4" width="1.3" height="6" fill="#00d000"/><rect x="977.4" y="4" width="1.3" height="6" fill="#00d000"/><rect x="983.2" y="4" width="1.3" height="6" fill="#00d000"/><rect x="989.0" y="0" width="1.3" height="10" fill="#00d000"/><rect x="994.8" y="4" width="1.3" height="6" fill="#00d000"/><rect x="1000.6" y="4" width="1.3" height="6" fill="#00d000"/><rect x="1006.4" y="4" width="1.3" height="6" fill="#00d000"/><rect x="1012.2" y="4" width="1.3" height="6" fill="#00d000"/><rect x="1018.0" y="4" width="1.3" height="6" fill="#00d000"/><rect x="1023.8" y="4" width="1.3" height="6" fill="#00d000"/><rect x="1029.6" y="4" width="1.3" height="6" fill="#00d000"/><rect x="1035.4" y="4" width="1.3" height="6" fill="#00d000"/><rect x="1041.2" y="4" width="1.3" height="6" fill="#00d000"/><rect x="1047.0" y="0" width="1.3" height="10" fill="#00d000"/><rect x="1052.8" y="4" width="1.3" height="6" fill="#00d000"/><rect x="1058.6" y="4" width="1.3" height="6" fill="#00d000"/><rect x="1064.4" y="4" width="1.3" height="6" fill="#00d000"/><rect x="1070.1" y="4" width="1.3" height="6" fill="#00d000"/><rect x="1075.9" y="4" width="1.3" height="6" fill="#00d000"/><rect x="1081.7" y="4" width="1.3" height="6" fill="#00d000"/><rect x="1087.5" y="4" width="1.3" height="6" fill="#00d000"/><rect x="1093.3" y="4" width="1.3" height="6" fill="#00d000"/><rect x="1099.1" y="4" width="1.3" height="6" fill="#00d000"/><rect x="1104.9" y="0" width="1.3" height="10" fill="#00d000"/><rect x="1110.7" y="4" width="1.3" height="6" fill="#00d000"/><rect x="1116.5" y="4" width="1.3" height="6" fill="#00d000"/><rect x="1122.3" y="4" width="1.3" height="6" fill="#00d000"/><rect x="1128.1" y="4" width="1.3" height="6" fill="#00d000"/><rect x="1133.9" y="4" width="1.3" height="6" fill="#00d000"/><rect x="1139.7" y="4" width="1.3" height="6" fill="#00d000"/><rect x="1145.5" y="4" width="1.3" height="6" fill="#00d000"/><rect x="1151.3" y="4" width="1.3" height="6" fill="#00d000"/><rect x="1157.1" y="4" width="1.3" height="6" fill="#00d000"/><text x="4.0" y="25" fill="#00d000" font-size="14" text-anchor="middle" font-family="Liberation Sans">0 ps</text><text x="119.9" y="25" fill="#00d000" font-size="14" text-anchor="middle" font-family="Liberation Sans">100 ps</text><text x="235.9" y="25" fill="#00d000" font-size="14" text-anchor="middle" font-family="Liberation Sans">200 ps</text><text x="351.8" y="25" fill="#00d000" font-size="14" text-anchor="middle" font-family="Liberation Sans">300 ps</text><text x="467.8" y="25" fill="#00d000" font-size="14" text-anchor="middle" font-family="Liberation Sans">400 ps</text><text x="583.7" y="25" fill="#00d000" font-size="14" text-anchor="middle" font-family="Liberation Sans">500 ps</text><text x="699.6" y="25" fill="#00d000" font-size="14" text-anchor="middle" font-family="Liberation Sans">600 ps</text><text x="815.6" y="25" fill="#00d000" font-size="14" text-anchor="middle" font-family="Liberation Sans">700 ps</text><text x="931.5" y="25" fill="#00d000" font-size="14" text-anchor="middle" font-family="Liberation Sans">800 ps</text><text x="1047.5" y="25" fill="#00d000" font-size="14" text-anchor="middle" font-family="Liberation Sans">900 ps</text><text x="1163.4" y="25" fill="#00d000" font-size="14" text-anchor="middle" font-family="Liberation Sans">1000 ps</text><rect x="4" y="28" width="1156" height="1.2" fill="#808080"/><rect x="861.6" y="0" width="3" height="30" fill="#f0c800"/><rect x="841.1" y="30.5" width="45" height="17" fill="#000" stroke="#d8a800" stroke-width="1.3"/><text x="863.6" y="44" fill="#f0d040" font-size="13.5" text-anchor="middle" font-family="Liberation Sans">741 ps</text></svg>
<div style="position:absolute;left:722px;top:749px;width:5px;height:48px;background:#000"></div>
<div style="position:absolute;left:392px;top:797px;width:1498px;height:5px;background:#f0f0f0"></div>
<div style="position:absolute;left:392px;top:801px;width:10px;height:23px;background:#808080"></div>
<div style="position:absolute;left:402px;top:802px;width:188px;height:21px;background:#f4f4f4"></div>
<div style="position:absolute;left:402px;top:802px;width:21px;height:21px;background:#f0f0f0;border-top:1px solid #fff;border-left:1px solid #fff;border-right:2px solid #a0a0a0;border-bottom:2px solid #a0a0a0"></div>
<svg style="position:absolute;left:408px;top:807px;" width="10" height="10" viewBox="0 0 10 10"><path d="M7 1 V9 L2 5 Z" fill="#999"/></svg>
<div style="position:absolute;left:569px;top:802px;width:21px;height:21px;background:#f0f0f0;border-top:1px solid #fff;border-left:1px solid #fff;border-right:2px solid #a0a0a0;border-bottom:2px solid #a0a0a0"></div>
<svg style="position:absolute;left:575px;top:807px;" width="10" height="10" viewBox="0 0 10 10"><path d="M3 1 V9 L8 5 Z" fill="#999"/></svg>
<div style="position:absolute;left:594px;top:802px;width:125px;height:21px;background:#f4f4f4"></div>
<div style="position:absolute;left:594px;top:802px;width:21px;height:21px;background:#f0f0f0;border-top:1px solid #fff;border-left:1px solid #fff;border-right:2px solid #a0a0a0;border-bottom:2px solid #a0a0a0"></div>
<svg style="position:absolute;left:600px;top:807px;" width="10" height="10" viewBox="0 0 10 10"><path d="M7 1 V9 L2 5 Z" fill="#999"/></svg>
<div style="position:absolute;left:698px;top:802px;width:21px;height:21px;background:#f0f0f0;border-top:1px solid #fff;border-left:1px solid #fff;border-right:2px solid #a0a0a0;border-bottom:2px solid #a0a0a0"></div>
<svg style="position:absolute;left:704px;top:807px;" width="10" height="10" viewBox="0 0 10 10"><path d="M3 1 V9 L8 5 Z" fill="#999"/></svg>
<div style="position:absolute;left:723px;top:802px;width:1166px;height:21px;background:#f4f4f4"></div>
<div style="position:absolute;left:723px;top:802px;width:21px;height:21px;background:#f0f0f0;border-top:1px solid #fff;border-left:1px solid #fff;border-right:2px solid #a0a0a0;border-bottom:2px solid #a0a0a0"></div>
<svg style="position:absolute;left:729px;top:807px;" width="10" height="10" viewBox="0 0 10 10"><path d="M7 1 V9 L2 5 Z" fill="#000"/></svg>
<div style="position:absolute;left:1868px;top:802px;width:21px;height:21px;background:#f0f0f0;border-top:1px solid #fff;border-left:1px solid #fff;border-right:2px solid #a0a0a0;border-bottom:2px solid #a0a0a0"></div>
<svg style="position:absolute;left:1874px;top:807px;" width="10" height="10" viewBox="0 0 10 10"><path d="M3 1 V9 L8 5 Z" fill="#000"/></svg>
<div style="position:absolute;left:1578px;top:806px;width:1px;height:14px;background:#f0c800"></div>
<div style="position:absolute;left:1895px;top:749px;width:21px;height:48px;background:#808080"></div>
<div style="position:absolute;left:1895px;top:802px;width:21px;height:22px;background:#808080"></div>
<div style="position:absolute;left:0px;top:827px;width:186px;height:31px;background:#c8c8c8"></div>
<div style="position:absolute;left:0px;top:831px;width:80px;height:26px;background:#c8c8c8;border-top:2px solid #333;border-bottom:2px solid #444;border-right:1px solid #555;border-radius:0 0 4px 4px"></div>
<div style="position:absolute;left:-2px;top:836px;font-size:13px;line-height:15px;color:#000;white-space:pre;">emory List</div>
<svg style="position:absolute;left:65px;top:838px;" width="11" height="11" viewBox="0 0 11 11"><path d="M1.5 1.5 L9.5 9.5 M9.5 1.5 L1.5 9.5" stroke="#a8a8a8" stroke-width="2"/></svg>
<div style="position:absolute;left:80px;top:829px;width:74px;height:28px;background:#f0f0f0;border-bottom:2px solid #333;border-right:1px solid #444;border-left:1px solid #444;border-radius:0 0 4px 4px"></div>
<svg style="position:absolute;left:86px;top:832px;" width="22" height="22" viewBox="0 0 22 22"><path d="M6 2 H16 L19 6 L16 15 H4 L6 6 Z" fill="#fff" stroke="#222" stroke-width="1.3"/><path d="M8 6h6M8 9h6M7 12h6" stroke="#4060c0"/><path d="M1 2h3M1 5h3M1 8h3" stroke="#8090c0"/><rect x="1" y="13" width="6" height="6" fill="#e02010" stroke="#111" transform="rotate(45 4 16)"/><rect x="15" y="14" width="5" height="5" fill="#e02010" stroke="#111" transform="rotate(45 17.5 16.5)"/></svg>
<div style="position:absolute;left:111px;top:836px;font-size:14px;line-height:16px;color:#000;white-space:pre;">sim</div>
<svg style="position:absolute;left:139px;top:838px;" width="11" height="11" viewBox="0 0 11 11"><path d="M1.5 1.5 L9.5 9.5 M9.5 1.5 L1.5 9.5" stroke="#b0b0b0" stroke-width="2"/></svg>
<div style="position:absolute;left:159px;top:831px;width:13px;height:20px;background:#f0f0f0;border-top:1px solid #fff;border-left:1px solid #fff;border-right:2px solid #a0a0a0;border-bottom:2px solid #a0a0a0"></div>
<svg style="position:absolute;left:161px;top:836px;" width="9" height="10" viewBox="0 0 9 10"><path d="M7 1 V9 L1 5 Z" fill="#000"/></svg>
<div style="position:absolute;left:172px;top:831px;width:13px;height:20px;background:#f0f0f0;border-top:1px solid #fff;border-left:1px solid #fff;border-right:2px solid #a0a0a0;border-bottom:2px solid #a0a0a0"></div>
<svg style="position:absolute;left:174px;top:836px;" width="9" height="10" viewBox="0 0 9 10"><path d="M1 1 L5 5 L1 9 M4 1 L8 5 L4 9" fill="none" stroke="#555" stroke-width="1.2"/></svg>
<div style="position:absolute;left:389px;top:827px;width:1529px;height:31px;background:#f0f0f0"></div>
<div style="position:absolute;left:389px;top:830px;width:1504px;height:1px;background:#333"></div>
<div style="position:absolute;left:389px;top:831px;width:89px;height:26px;background:#f0f0f0;border-bottom:2px solid #333;border-left:1px solid #444;border-right:1px solid #444;border-radius:0 0 4px 4px"></div>
<svg style="position:absolute;left:395px;top:834px;" width="20" height="20" viewBox="0 0 20 20"><rect x="0.5" y="0.5" width="17" height="17" fill="#f0f0f0" stroke="#222"/><rect x="1.5" y="1.5" width="15" height="3" fill="#fff"/><rect x="1.5" y="5" width="15" height="11.5" fill="#000"/><path d="M2 9 H4 V7 H8 V9 H11 V7 H14 V9 H16" fill="none" stroke="#20c020" stroke-width="1.2"/><path d="M2 14 H5 V12 H8" fill="none" stroke="#20c020" stroke-width="1.2"/><path d="M6.5 5 V16" stroke="#20d8f0" stroke-width="1.2"/><path d="M9 14.5 H16" stroke="#3040e0" stroke-width="1.5"/></svg>
<div style="position:absolute;left:418px;top:836px;font-size:13.5px;line-height:15.5px;color:#000;white-space:pre;">Wave</div>
<svg style="position:absolute;left:462px;top:838px;" width="11" height="11" viewBox="0 0 11 11"><path d="M1.5 1.5 L9.5 9.5 M9.5 1.5 L1.5 9.5" stroke="#b0b0b0" stroke-width="2"/></svg>
<div style="position:absolute;left:478px;top:831px;width:109px;height:26px;background:#c8c8c8;border-bottom:2px solid #444;border-right:1px solid #555;border-left:1px solid #555;border-radius:0 0 4px 4px"></div>
<svg style="position:absolute;left:486px;top:834px;" width="20" height="20" viewBox="0 0 20 20"><rect x="0.5" y="0.5" width="17" height="17" fill="#2050c0" stroke="#223"/><path d="M3 4 h4 v10 h-4 z" fill="none" stroke="#fff"/><path d="M9 6 H15 M12 3 V15 M9 12 H15" stroke="#ff3030" stroke-width="1.3"/><path d="M12 8v4" stroke="#ffff40" stroke-width="2"/></svg>
<div style="position:absolute;left:509px;top:836px;font-size:13.5px;line-height:15.5px;color:#000;white-space:pre;">Dataflow</div>
<svg style="position:absolute;left:572px;top:838px;" width="11" height="11" viewBox="0 0 11 11"><path d="M1.5 1.5 L9.5 9.5 M9.5 1.5 L1.5 9.5" stroke="#a8a8a8" stroke-width="2"/></svg>
<div style="position:absolute;left:587px;top:831px;width:97px;height:26px;background:#c8c8c8;border-bottom:2px solid #444;border-right:1px solid #555;border-left:1px solid #555;border-radius:0 0 4px 4px"></div>
<svg style="position:absolute;left:595px;top:834px;" width="20" height="20" viewBox="0 0 20 20"><path d="M1 8 Q2 6 4 6 H14 Q16 6 17 8 V12 H1 Z" fill="#3a3a3a"/><path d="M2 8 H16" stroke="#888" stroke-width="0.8"/><circle cx="4" cy="10" r="0.9" fill="#30e030"/></svg>
<div style="position:absolute;left:617px;top:836px;font-size:13.5px;line-height:15.5px;color:#000;white-space:pre;">pc.vhd</div>
<svg style="position:absolute;left:669px;top:838px;" width="11" height="11" viewBox="0 0 11 11"><path d="M1.5 1.5 L9.5 9.5 M9.5 1.5 L1.5 9.5" stroke="#a8a8a8" stroke-width="2"/></svg>
<div style="position:absolute;left:684px;top:831px;width:106px;height:26px;background:#c8c8c8;border-bottom:2px solid #444;border-right:1px solid #555;border-left:1px solid #555;border-radius:0 0 4px 4px"></div>
<svg style="position:absolute;left:692px;top:834px;" width="20" height="20" viewBox="0 0 20 20"><path d="M1 8 Q2 6 4 6 H14 Q16 6 17 8 V12 H1 Z" fill="#3a3a3a"/><path d="M2 8 H16" stroke="#888" stroke-width="0.8"/><circle cx="4" cy="10" r="0.9" fill="#30e030"/></svg>
<div style="position:absolute;left:714px;top:836px;font-size:13.5px;line-height:15.5px;color:#000;white-space:pre;">CPU.vhd</div>
<svg style="position:absolute;left:775px;top:838px;" width="11" height="11" viewBox="0 0 11 11"><path d="M1.5 1.5 L9.5 9.5 M9.5 1.5 L1.5 9.5" stroke="#a8a8a8" stroke-width="2"/></svg>
<div style="position:absolute;left:1893px;top:833px;width:12px;height:20px;background:#f0f0f0;border-top:1px solid #fff;border-left:1px solid #fff;border-right:2px solid #a0a0a0;border-bottom:2px solid #a0a0a0"></div>
<svg style="position:absolute;left:1895px;top:838px;" width="9" height="10" viewBox="0 0 9 10"><path d="M6 1 L2 5 L6 9 M9 1 L5 5 L9 9" fill="none" stroke="#777" stroke-width="1.2"/></svg>
<div style="position:absolute;left:1905px;top:833px;width:12px;height:20px;background:#f0f0f0;border-top:1px solid #fff;border-left:1px solid #fff;border-right:2px solid #a0a0a0;border-bottom:2px solid #a0a0a0"></div>
<svg style="position:absolute;left:1907px;top:838px;" width="9" height="10" viewBox="0 0 9 10"><path d="M1 1 L5 5 L1 9 M4 1 L8 5 L4 9" fill="none" stroke="#777" stroke-width="1.2"/></svg>
<div style="position:absolute;left:0px;top:858px;width:1919px;height:9px;background:#c8c8c8"></div>
<div style="position:absolute;left:0px;top:867px;width:1919px;height:124px;background:#f0f0f0;border-top:1px solid #fff"></div>
<svg style="position:absolute;left:4px;top:870px;" width="18" height="19" viewBox="0 0 18 19"><path d="M2 18 V6 Q2 1 9 1 Q16 1 16 6 V18 L13 16 V7 H5 V16 Z" fill="#808080" stroke="#444" stroke-width="0.8"/><rect x="5" y="4" width="8" height="6" fill="#fff"/></svg>
<div style="position:absolute;left:26px;top:871px;font-size:14px;line-height:16px;color:#000;white-space:pre;">Transcript</div>
<div style="position:absolute;left:95px;top:875px;width:860px;height:2px;border-top:1px solid #888;border-bottom:1px solid #fff"></div>
<div style="position:absolute;left:990px;top:875px;width:862px;height:2px;border-top:1px solid #888;border-bottom:1px solid #fff"></div>
<div style="position:absolute;left:95px;top:882px;width:860px;height:2px;border-top:1px solid #888;border-bottom:1px solid #fff"></div>
<div style="position:absolute;left:990px;top:882px;width:862px;height:2px;border-top:1px solid #888;border-bottom:1px solid #fff"></div>
<div style="position:absolute;left:961px;top:875px;width:26px;height:9px;background-image:radial-gradient(#222 0.8px, transparent 1.1px);background-size:4px 3px"></div>
<div style="position:absolute;left:1857px;top:871px;width:16px;height:17px;background:#f0f0f0;border-right:2px solid #a0a0a0;border-bottom:2px solid #a0a0a0;border-top:1px solid #fff;border-left:1px solid #fff"></div>
<div style="position:absolute;left:1877px;top:871px;width:16px;height:17px;background:#f0f0f0;border-right:2px solid #a0a0a0;border-bottom:2px solid #a0a0a0;border-top:1px solid #fff;border-left:1px solid #fff"></div>
<div style="position:absolute;left:1897px;top:871px;width:18px;height:17px;background:#f0f0f0;border-right:2px solid #a0a0a0;border-bottom:2px solid #a0a0a0;border-top:1px solid #fff;border-left:1px solid #fff"></div>
<svg style="position:absolute;left:1859px;top:873px;" width="12" height="12" viewBox="0 0 12 12"><path d="M6 1v10M1 6h10" stroke="#000" stroke-width="2.2"/></svg>
<svg style="position:absolute;left:1879px;top:873px;" width="12" height="12" viewBox="0 0 12 12"><rect x="1.5" y="5.5" width="5" height="5" fill="none" stroke="#000" stroke-width="1.6"/><path d="M4 8 L10 2 M6 2h4v4" fill="none" stroke="#000" stroke-width="1.6"/></svg>
<svg style="position:absolute;left:1900px;top:873px;" width="12" height="12" viewBox="0 0 12 12"><path d="M1.5 1.5 L10.5 10.5 M10.5 1.5 L1.5 10.5" stroke="#000" stroke-width="1.6"/></svg>
<div style="position:absolute;left:4px;top:891px;width:1888px;height:98px;background:#fff;border-top:2px solid #333;border-left:2px solid #333"></div>
<div style="position:absolute;left:9px;top:894px;font-size:13.5px;line-height:15.5px;color:#2030b0;white-space:pre;">VSIM 49&gt;</div>
<div style="position:absolute;left:73px;top:894px;font-size:14.5px;line-height:16.5px;color:#000;white-space:pre;font-family:'Liberation Mono',monospace">run</div>
<div style="position:absolute;left:9px;top:913px;font-size:14.5px;line-height:16.5px;color:#000;white-space:pre;font-family:'Liberation Mono',monospace">force -freeze sim:/cpu/Clk 1 0</div>
<div style="position:absolute;left:9px;top:932px;font-size:13.5px;line-height:15.5px;color:#2030b0;white-space:pre;">VSIM 51&gt;</div>
<div style="position:absolute;left:73px;top:932px;font-size:14.5px;line-height:16.5px;color:#000;white-space:pre;font-family:'Liberation Mono',monospace">run</div>
<div style="position:absolute;left:8px;top:969px;font-size:13.5px;line-height:15.5px;color:#2030b0;white-space:pre;">VSIM 52&gt;</div>
<div style="position:absolute;left:1896px;top:891px;width:21px;height:98px;background:#f4f4f4"></div>
<div style="position:absolute;left:1896px;top:891px;width:21px;height:20px;background:#f0f0f0;border-top:1px solid #fff;border-left:1px solid #fff;border-right:2px solid #a0a0a0;border-bottom:2px solid #a0a0a0"></div>
<svg style="position:absolute;left:1901px;top:898px;" width="10" height="6" viewBox="0 0 10 6"><path d="M1 5 L5 1 L9 5 Z" fill="#000"/></svg>
<div style="position:absolute;left:1896px;top:969px;width:21px;height:20px;background:#f0f0f0;border-top:1px solid #fff;border-left:1px solid #fff;border-right:2px solid #a0a0a0;border-bottom:2px solid #a0a0a0"></div>
<svg style="position:absolute;left:1901px;top:976px;" width="10" height="6" viewBox="0 0 10 6"><path d="M1 1 L5 5 L9 1 Z" fill="#000"/></svg>
<div style="position:absolute;left:1897px;top:912px;width:20px;height:56px;background:#f4f4f4"></div>
<div style="position:absolute;left:1897px;top:958px;width:20px;height:10px;background:#f0f0f0;border-top:1px solid #fff;border-left:1px solid #fff;border-right:2px solid #a0a0a0;border-bottom:2px solid #a0a0a0"></div>
<div style="position:absolute;left:0px;top:991px;width:1919px;height:29px;background:#f0f0f0"></div>
<div style="position:absolute;left:4px;top:994px;width:211px;height:23px;border-top:1px solid #a0a0a0;border-left:1px solid #a0a0a0;border-bottom:1px solid #fff;border-right:1px solid #fff"></div>
<div style="position:absolute;left:12px;top:998px;font-size:13.5px;line-height:15.5px;color:#000;white-space:pre;">0 ps to 1 ns</div>
<div style="position:absolute;left:222px;top:994px;width:94px;height:23px;border-top:1px solid #a0a0a0;border-left:1px solid #a0a0a0;border-bottom:1px solid #fff;border-right:1px solid #fff"></div>
<div style="position:absolute;left:225px;top:998px;font-size:13.5px;line-height:15.5px;color:#000;white-space:pre;">Project : FPGA</div>
<div style="position:absolute;left:322px;top:994px;width:247px;height:23px;border-top:1px solid #a0a0a0;border-left:1px solid #a0a0a0;border-bottom:1px solid #fff;border-right:1px solid #fff"></div>
<div style="position:absolute;left:326px;top:998px;font-size:13.5px;line-height:15.5px;color:#000;white-space:pre;">Now: 800 ps   Delta: 0</div>
<div style="position:absolute;left:575px;top:994px;width:1322px;height:23px;border-top:1px solid #a0a0a0;border-left:1px solid #a0a0a0;border-bottom:1px solid #fff;border-right:1px solid #fff"></div>
<div style="position:absolute;left:578px;top:998px;font-size:13.5px;line-height:15.5px;color:#000;white-space:pre;">sim:/cpu</div>
<svg style="position:absolute;left:1903px;top:1005px;" width="14" height="14" viewBox="0 0 14 14"><path d="M13 2 L2 13 M13 6 L6 13 M13 10 L10 13" stroke="#999" stroke-width="1.2"/></svg>
<div style="position:absolute;left:0px;top:1020px;width:1919px;height:3px;background:#1a1a1a"></div>
<div style="position:absolute;left:22px;top:104px;font-size:13.5px;line-height:15.5px;color:#8a8a8a;white-space:pre;">ColumnLayout</div>
<div style="position:absolute;left:114px;top:101px;width:266px;height:23px;background:#f0f0f0;border-top:1px solid #a0a0a0;border-left:1px solid #a0a0a0;border-bottom:1px solid #fff;border-right:1px solid #fff"></div>
<div style="position:absolute;left:117px;top:106px;font-size:14px;line-height:16px;color:#999;white-space:pre;font-family:'Liberation Mono',monospace">AllColumns</div>
<div style="position:absolute;left:383px;top:101px;width:23px;height:22px;background:#f0f0f0;border-top:1px solid #fff;border-left:1px solid #fff;border-right:2px solid #a0a0a0;border-bottom:2px solid #a0a0a0"></div>
<svg style="position:absolute;left:388px;top:107px;" width="13" height="9" viewBox="0 0 13 9"><path d="M1 1 L6.5 4 L12 1 M1 4 L6.5 7 L12 4" fill="none" stroke="#888" stroke-width="1.3"/></svg>
<svg style="position:absolute;left:20px;top:143px;" width="22" height="22" viewBox="0 0 22 22"><path d="M1 6 L8 2 L14 3 L13 9 L6 12 L1 11 Z" fill="#70b0f0" stroke="#3070d0" stroke-width="0.8"/><path d="M14 2 V14" stroke="#b08030" stroke-width="2.2"/><circle cx="14" cy="15" r="4.5" fill="#30a050" stroke="#206030" stroke-width="0.6"/><path d="M14 12.5v5M11.5 15h5" stroke="#fff" stroke-width="1.5"/></svg>
<svg style="position:absolute;left:45px;top:153px;" width="7" height="4" viewBox="0 0 7 4"><path d="M0 0 H7 L3.5 4 Z" fill="#000"/></svg>
<svg style="position:absolute;left:59px;top:143px;" width="22" height="22" viewBox="0 0 22 22"><path d="M1 6 L8 2 L14 3 L13 9 L6 12 L1 11 Z" fill="#70b0f0" stroke="#3070d0" stroke-width="0.8"/><path d="M14 2 V14" stroke="#b08030" stroke-width="2.2"/><circle cx="14" cy="15" r="4.5" fill="#e05030" stroke="#903020" stroke-width="0.6"/><path d="M11.5 15h5" stroke="#fff" stroke-width="1.5"/></svg>
<svg style="position:absolute;left:84px;top:153px;" width="7" height="4" viewBox="0 0 7 4"><path d="M0 0 H7 L3.5 4 Z" fill="#000"/></svg>
<svg style="position:absolute;left:97px;top:143px;" width="22" height="22" viewBox="0 0 22 22"><path d="M1 6 L8 2 L14 3 L13 9 L6 12 L1 11 Z" fill="#70b0f0" stroke="#3070d0" stroke-width="0.8"/><path d="M14 2 V14" stroke="#b08030" stroke-width="2.2"/><path d="M7 20 L18 8 L21 11 L10 21 Z" fill="#e8d040" stroke="#b08030" stroke-width="0.8"/></svg>
<svg style="position:absolute;left:125px;top:143px;" width="22" height="22" viewBox="0 0 22 22"><path d="M1 6 L8 2 L14 3 L13 9 L6 12 L1 11 Z" fill="#70b0f0" stroke="#3070d0" stroke-width="0.8"/><path d="M14 2 V14" stroke="#b08030" stroke-width="2.2"/><rect x="8" y="10" width="12" height="11" fill="#6090e0" stroke="#3050a0" stroke-width="0.8"/><rect x="10" y="16" width="8" height="4" fill="#c0e0a0"/></svg>
<svg style="position:absolute;left:150px;top:153px;" width="7" height="4" viewBox="0 0 7 4"><path d="M0 0 H7 L3.5 4 Z" fill="#000"/></svg>
<svg style="position:absolute;left:163px;top:143px;" width="22" height="22" viewBox="0 0 22 22"><path d="M1 6 L8 2 L14 3 L13 9 L6 12 L1 11 Z" fill="#70b0f0" stroke="#3070d0" stroke-width="0.8"/><path d="M14 2 V14" stroke="#b08030" stroke-width="2.2"/><path d="M8 13 H14 V9 L21 15 L14 21 V17 H8 Z" fill="#30a040" stroke="#207030" stroke-width="0.8"/></svg>
<div style="position:absolute;left:641px;top:183px;width:26px;height:25px;background:#f0f0f0;border-top:1px solid #fff;border-left:1px solid #fff;border-right:2px solid #a0a0a0;border-bottom:2px solid #a0a0a0"></div>
<svg style="position:absolute;left:645px;top:186px;" width="20" height="20" viewBox="0 0 20 20"><rect x="1.5" y="1.5" width="9" height="9" rx="2" fill="none" stroke="#006600" stroke-width="2.4"/><rect x="8.5" y="8.5" width="9" height="9" rx="2" fill="none" stroke="#006600" stroke-width="2.4"/></svg>
<svg style="position:absolute;left:674px;top:185px;" width="20" height="21" viewBox="0 0 20 21"><path d="M9.5 1 L18 10 H13 V20 H6 V10 H1 Z" fill="#303030"/><path d="M9.5 1 L1 10 H6 V20 H9.5 Z" fill="#555"/></svg>
<svg style="position:absolute;left:701px;top:186px;" width="22" height="18" viewBox="0 0 22 18"><path d="M1 9 L10 1 V6 H21 V13 H10 V17 Z" fill="#222"/><path d="M1 9 L10 1 V6 H21 V9 Z" fill="#555"/></svg>
<svg style="position:absolute;left:728px;top:186px;" width="22" height="18" viewBox="0 0 22 18"><path d="M21 9 L12 1 V6 H1 V13 H12 V17 Z" fill="#a8a8a8"/></svg>
<div style="position:absolute;left:759px;top:185px;width:1px;height:18px;border-left:1px dotted #555"></div>
<svg style="position:absolute;left:770px;top:185px;" width="22" height="21" viewBox="0 0 22 21"><rect x="1" y="1" width="12" height="17" fill="#fff" stroke="#555"/><path d="M3 5h7M3 8h5M3 11h7M3 14h6" stroke="#111" stroke-width="1.3"/><path d="M17 3 V20 M14 6 L17 3 L20 6 M14 3 H20" stroke="#1030a0" stroke-width="1.6" fill="none"/></svg>
<div style="position:absolute;left:799px;top:183px;width:74px;height:23px;background:#fff;border-top:1px solid #a0a0a0;border-left:1px solid #a0a0a0"></div>
<div style="position:absolute;left:817px;top:187px;font-size:14px;line-height:16px;color:#222;white-space:pre;font-family:'Liberation Mono',monospace">100</div>
<div style="position:absolute;left:852px;top:187px;font-size:14px;line-height:16px;color:#222;white-space:pre;font-family:'Liberation Mono',monospace">ps</div>
<div style="position:absolute;left:875px;top:183px;width:16px;height:11px;background:#f0f0f0;border-top:1px solid #fff;border-left:1px solid #fff;border-right:2px solid #a0a0a0;border-bottom:2px solid #a0a0a0"></div>
<svg style="position:absolute;left:877px;top:185px;" width="12" height="8" viewBox="0 0 12 8"><path d="M1 7 L6 1 L11 7 Z" fill="#000"/></svg>
<div style="position:absolute;left:875px;top:194px;width:16px;height:12px;background:#f0f0f0;border-top:1px solid #fff;border-left:1px solid #fff;border-right:2px solid #a0a0a0;border-bottom:2px solid #a0a0a0"></div>
<svg style="position:absolute;left:877px;top:196px;" width="12" height="8" viewBox="0 0 12 8"><path d="M1 1 L6 7 L11 1 Z" fill="#000"/></svg>
<svg style="position:absolute;left:901px;top:185px;" width="22" height="21" viewBox="0 0 22 21"><rect x="1" y="1" width="12" height="17" fill="#fff" stroke="#555"/><path d="M3 5h7M3 8h5M3 11h7M3 14h6" stroke="#111" stroke-width="1.3"/><path d="M17 3 V19 M14 16 L17 19 L20 16 M14 19 H20" stroke="#1030a0" stroke-width="1.6" fill="none"/></svg>
<svg style="position:absolute;left:929px;top:185px;" width="22" height="21" viewBox="0 0 22 21"><rect x="1" y="1" width="12" height="17" fill="#fff" stroke="#555"/><path d="M3 5h7M3 8h5M3 11h7M3 14h6" stroke="#111" stroke-width="1.3"/><path d="M17 9 V19 M14 16 L17 19 L20 16" stroke="#1030c0" stroke-width="1.6" fill="none"/><path d="M17 1 L20 4 L17 7 L14 4 Z" fill="none" stroke="#e03020" stroke-width="1.2"/></svg>
<svg style="position:absolute;left:956px;top:185px;" width="22" height="21" viewBox="0 0 22 21"><rect x="1" y="1" width="12" height="17" fill="#fff" stroke="#555"/><path d="M3 5h7M3 8h5M3 11h7M3 14h6" stroke="#111" stroke-width="1.3"/><path d="M17 3 V19 M14 9 L17 12 L20 9 M14 16 L17 19 L20 16" stroke="#1030a0" stroke-width="1.6" fill="none"/></svg>
<svg style="position:absolute;left:984px;top:185px;" width="22" height="21" viewBox="0 0 22 21"><rect x="1" y="1" width="12" height="17" fill="#fff" stroke="#555"/><path d="M3 5h7M3 8h5M3 11h7M3 14h6" stroke="#111" stroke-width="1.3"/><path d="M17 10 V19 M14 16 L17 19 L20 16" stroke="#1030c0" stroke-width="1.6" fill="none"/><path d="M7 2 L19 14 M19 2 L7 14" stroke="#701010" stroke-width="2.4"/></svg>
<svg style="position:absolute;left:1011px;top:186px;" width="19" height="19" viewBox="0 0 19 19"><circle cx="9.5" cy="9.5" r="8" fill="none" stroke="#f06050" stroke-width="3" stroke-dasharray="2 1"/><path d="M5 9.5 H14 M9.5 5 V14" stroke="#f06050" stroke-width="2" stroke-dasharray="1.5 1"/></svg>
<div style="position:absolute;left:1041px;top:186px;width:1px;height:18px;border-left:1px dotted #555"></div>
<div style="position:absolute;left:1052px;top:183px;width:26px;height:25px;background:#f0f0f0;border-top:1px solid #fff;border-left:1px solid #fff;border-right:2px solid #a0a0a0;border-bottom:2px solid #a0a0a0"></div>
<svg style="position:absolute;left:1055px;top:186px;" width="20" height="20" viewBox="0 0 20 20"><circle cx="6" cy="5" r="4" fill="none" stroke="#444" stroke-dasharray="1.5 1"/><path d="M2 18 H18 M11 6 V18 M15 8 V18" stroke="#555" stroke-width="2" stroke-dasharray="1 1"/><path d="M12 7 V16" stroke="#e8d040" stroke-width="2"/><path d="M15 8 V16" stroke="#e05050" stroke-width="2"/><circle cx="8" cy="15" r="1.5" fill="#30c030"/></svg>
<div style="position:absolute;left:1085px;top:183px;width:26px;height:25px;background:#f0f0f0;border-top:1px solid #fff;border-left:1px solid #fff;border-right:2px solid #a0a0a0;border-bottom:2px solid #a0a0a0"></div>
<svg style="position:absolute;left:1088px;top:186px;" width="20" height="20" viewBox="0 0 20 20"><circle cx="5" cy="5" r="4" fill="none" stroke="#444" stroke-dasharray="1.5 1"/><circle cx="11" cy="5" r="4" fill="none" stroke="#444" stroke-dasharray="1.5 1"/><path d="M2 18 H18 M14 8 V18" stroke="#555" stroke-width="2" stroke-dasharray="1 1"/><path d="M12 9 V16" stroke="#e8d040" stroke-width="2"/><path d="M15 8 V16" stroke="#e05050" stroke-width="2"/><circle cx="9" cy="15" r="1.5" fill="#30c030"/></svg>
<svg style="position:absolute;left:1116px;top:184px;" width="21" height="22" viewBox="0 0 21 22"><path d="M4 11 V5 a1.5 1.5 0 0 1 3 0 V10 V3 a1.5 1.5 0 0 1 3 0 V10 V3 a1.5 1.5 0 0 1 3 0 V10 V5 a1.5 1.5 0 0 1 3 0 V14 Q16 19 11 20 H8 Q5 18 1 12 a1.3 1.3 0 0 1 3 -1 Z" fill="#fff" stroke="#111" stroke-width="1.2"/><path d="M12 17 L19 12" stroke="#80a8e8" stroke-width="3"/></svg>
<svg style="position:absolute;left:1447px;top:183px;" width="24" height="20" viewBox="0 0 24 20"><path d="M1 2 H6 a4 4 0 0 1 0 8 a4 4 0 0 1 0 8 H1 M6 10 H1" fill="none" stroke="#111" stroke-width="2"/><path d="M10 10 H22 M10 10 L15 5 M10 10 L15 15" stroke="#1060ff" stroke-width="2.6"/></svg>
<svg style="position:absolute;left:1474px;top:193px;" width="7" height="4" viewBox="0 0 7 4"><path d="M0 0 H7 L3.5 4 Z" fill="#000"/></svg>
<svg style="position:absolute;left:1486px;top:183px;" width="24" height="20" viewBox="0 0 24 20"><path d="M23 2 H18 a4 4 0 0 0 0 8 a4 4 0 0 0 0 8 H23 M18 10 H23" fill="none" stroke="#111" stroke-width="2"/><path d="M1 10 H14 M14 10 L9 5 M14 10 L9 15" stroke="#1060ff" stroke-width="2.6"/></svg>
<svg style="position:absolute;left:1513px;top:193px;" width="7" height="4" viewBox="0 0 7 4"><path d="M0 0 H7 L3.5 4 Z" fill="#000"/></svg>
<svg style="position:absolute;left:1526px;top:183px;" width="24" height="20" viewBox="0 0 24 20"><rect x="1" y="1" width="4" height="4" fill="none" stroke="#111" stroke-width="1.3"/><rect x="1" y="15" width="4" height="4" fill="none" stroke="#111" stroke-width="1.3"/><path d="M3 5 V15 M5 3 H9 L13 10 L9 17 H5 M3 10 H7" fill="none" stroke="#111" stroke-width="1.3"/><path d="M13 4 L19 10 L13 16 L7 10 Z" fill="#20e020" stroke="#111" stroke-width="1"/><path d="M13 7 V13 M10 10 H16" stroke="#111" stroke-width="1.3"/><rect x="19" y="8" width="4" height="4" fill="none" stroke="#1060ff" stroke-width="1.3"/></svg>
<div style="position:absolute;left:1558px;top:185px;width:1px;height:18px;border-left:1px dotted #555"></div>
<div style="position:absolute;left:1571px;top:185px;font-size:14px;line-height:16px;color:#222;white-space:pre;">Search:</div>
<div style="position:absolute;left:1625px;top:183px;width:145px;height:23px;background:#fff;border-top:1px solid #a0a0a0;border-left:1px solid #a0a0a0"></div>
<div style="position:absolute;left:1772px;top:184px;width:23px;height:22px;background:#f0f0f0;border-top:1px solid #fff;border-left:1px solid #fff;border-right:2px solid #a0a0a0;border-bottom:2px solid #a0a0a0"></div>
<svg style="position:absolute;left:1776px;top:190px;" width="15" height="10" viewBox="0 0 15 10"><path d="M1 1 H14 L7.5 9 Z" fill="#000"/></svg>
<svg style="position:absolute;left:1800px;top:184px;" width="22" height="22" viewBox="0 0 22 22"><path d="M3 16 V9 L5 5 V2 H9 V5 L10 9 V16 Z M12 16 V9 L13 5 V2 H17 V5 L19 9 V16 Z" fill="#b8b8b8" stroke="#888" stroke-width="1" stroke-dasharray="1.2 0.8"/><rect x="9" y="6" width="4" height="4" fill="#aaa"/><path d="M1 19 L5 16 M1 19 L5 21 M1 19 H7" stroke="#3060e0" stroke-width="1.5"/></svg>
<svg style="position:absolute;left:1825px;top:184px;" width="22" height="22" viewBox="0 0 22 22"><path d="M2 15 V8 L4 4 V1 H8 V4 L9 8 V15 Z M11 15 V8 L12 4 V1 H16 V4 L18 8 V15 Z" fill="#b8b8b8" stroke="#888" stroke-width="1" stroke-dasharray="1.2 0.8"/><rect x="8" y="5" width="4" height="4" fill="#aaa"/><path d="M21 19 L17 16 M21 19 L17 21 M21 19 H14" stroke="#3060e0" stroke-width="1.5"/></svg>
<svg style="position:absolute;left:1855px;top:184px;" width="22" height="22" viewBox="0 0 22 22"><rect x="1" y="5" width="12" height="12" fill="#555"/><rect x="3" y="1" width="4" height="5" fill="#555"/><rect x="8" y="1" width="4" height="5" fill="#555"/><path d="M9 17 L18 8" stroke="#7aa0e0" stroke-width="4"/><circle cx="18" cy="7" r="3.5" fill="none" stroke="#999" stroke-width="2"/></svg>
<div style="position:absolute;left:207px;top:223px;width:26px;height:25px;background:#fff;border-top:1px solid #a0a0a0;border-left:1px solid #a0a0a0;border-right:1px solid #e8e8e8;border-bottom:1px solid #e8e8e8"></div>
<svg style="position:absolute;left:210px;top:226px;" width="20" height="20" viewBox="0 0 20 20"><path d="M10 3 V17 M2 17 H18" stroke="#109010" stroke-width="1.3"/></svg>
<div style="position:absolute;left:240px;top:223px;width:25px;height:25px;background:#f0f0f0;border-top:1px solid #a0a0a0;border-left:1px solid #a0a0a0;border-right:1px solid #e8e8e8;border-bottom:1px solid #e8e8e8"></div>
<svg style="position:absolute;left:243px;top:226px;" width="20" height="20" viewBox="0 0 20 20"><path d="M2 17 H7 V3 H13 V17 H18" fill="#1a2a80" stroke="#108010" stroke-width="1.3"/><rect x="8" y="4" width="4" height="13" fill="#2040a0"/></svg>
<div style="position:absolute;left:272px;top:223px;width:26px;height:25px;background:#f0f0f0;border-top:1px solid #a0a0a0;border-left:1px solid #a0a0a0;border-right:1px solid #e8e8e8;border-bottom:1px solid #e8e8e8"></div>
<svg style="position:absolute;left:275px;top:226px;" width="20" height="20" viewBox="0 0 20 20"><rect x="2" y="3" width="16" height="14" fill="#006000"/><path d="M2 17 V3 H7 V17 H11 V3 H18 V17" fill="none" stroke="#20c020" stroke-width="1.2"/></svg>
<div style="position:absolute;left:308px;top:225px;width:1px;height:18px;border-left:1px dotted #555"></div>
<svg style="position:absolute;left:318px;top:226px;" width="21" height="21" viewBox="0 0 21 21"><rect x="1" y="2" width="19" height="17" fill="#6070b0"/><rect x="1" y="2" width="19" height="17" fill="none" stroke="#a0a8d0" stroke-dasharray="1 1"/></svg>
<svg style="position:absolute;left:345px;top:226px;" width="21" height="21" viewBox="0 0 21 21"><path d="M2 18 H7 V3 H17" fill="none" stroke="#777" stroke-width="1.5" stroke-dasharray="1.5 1"/><path d="M9 3 V18" stroke="#e8d040" stroke-width="1.5" stroke-dasharray="1 1"/></svg>
<svg style="position:absolute;left:373px;top:226px;" width="21" height="21" viewBox="0 0 21 21"><path d="M2 18 H9 V3 H18" fill="none" stroke="#40a040" stroke-width="1.4" stroke-dasharray="1.5 1.2"/></svg>
<svg style="position:absolute;left:402px;top:226px;" width="21" height="21" viewBox="0 0 21 21"><path d="M2 18 H7 V3 H18" fill="none" stroke="#40a040" stroke-width="1.4" stroke-dasharray="1.5 1.2"/><path d="M7 10 V18" stroke="#e8d040" stroke-width="1.4" stroke-dasharray="1 1"/></svg>
<div style="position:absolute;left:981px;top:223px;width:25px;height:25px;background:#fff;border-top:1px solid #a0a0a0;border-left:1px solid #a0a0a0;border-right:1px solid #e8e8e8;border-bottom:1px solid #e8e8e8"></div>
<svg style="position:absolute;left:985px;top:226px;" width="18" height="20" viewBox="0 0 18 20"><path d="M4 1 V15 L7.5 11.5 L10 18 L12.5 17 L10 10.5 H15 Z" fill="#000"/></svg>
<div style="position:absolute;left:1014px;top:223px;width:25px;height:25px;background:#f0f0f0;border-top:1px solid #fff;border-left:1px solid #fff;border-right:2px solid #a0a0a0;border-bottom:2px solid #a0a0a0"></div>
<svg style="position:absolute;left:1017px;top:226px;" width="20" height="20" viewBox="0 0 20 20"><path d="M2 8 V3 H8" fill="none" stroke="#111" stroke-width="1.8"/><rect x="6" y="6" width="9" height="9" fill="none" stroke="#111" stroke-width="2.6"/><path d="M12 17 H17 V12" fill="none" stroke="#111" stroke-width="1.8"/></svg>
<div style="position:absolute;left:1046px;top:223px;width:25px;height:25px;background:#f0f0f0;border-top:1px solid #fff;border-left:1px solid #fff;border-right:2px solid #a0a0a0;border-bottom:2px solid #a0a0a0"></div>
<svg style="position:absolute;left:1049px;top:226px;" width="20" height="20" viewBox="0 0 20 20"><path d="M10 1 V19 M1 10 H19 M7 4 L10 1 L13 4 M7 16 L10 19 L13 16 M4 7 L1 10 L4 13 M16 7 L19 10 L16 13" fill="none" stroke="#666" stroke-width="1.5" stroke-dasharray="1.5 0.8"/></svg>
<div style="position:absolute;left:1075px;top:221px;width:32px;height:28px;background:#f0f0f0;border-top:1px solid #a0a0a0;border-left:1px solid #a0a0a0;border-right:1px solid #e8e8e8;border-bottom:1px solid #e8e8e8"></div>
<svg style="position:absolute;left:1079px;top:225px;" width="24" height="20" viewBox="0 0 24 20"><path d="M7 2 V15 M17 2 V15" stroke="#111" stroke-width="1.5"/><rect x="4" y="15" width="6" height="3" fill="none" stroke="#111" stroke-width="1.4"/><rect x="14" y="15" width="6" height="3" fill="none" stroke="#111" stroke-width="1.4"/></svg>
<div style="position:absolute;left:1111px;top:223px;width:26px;height:25px;background:#f0f0f0;border-top:1px solid #fff;border-left:1px solid #fff;border-right:2px solid #a0a0a0;border-bottom:2px solid #a0a0a0"></div>
<svg style="position:absolute;left:1114px;top:226px;" width="20" height="20" viewBox="0 0 20 20"><path d="M1 6 H7 M4 3 L7 6 L4 9 M1 14 H7 M4 11 L7 14 L4 17" fill="none" stroke="#111" stroke-width="1.4"/><path d="M9 2 H11 V17 H19" fill="none" stroke="#111" stroke-width="1.4"/><path d="M15 2 V16" stroke="#444" stroke-dasharray="1 1"/><path d="M13 6 H19 M13 13 H19" stroke="#111" stroke-width="1.3"/></svg>
<div style="position:absolute;left:1147px;top:225px;width:1px;height:18px;border-left:1px dotted #555"></div>
<svg style="position:absolute;left:1156px;top:223px;" width="24" height="24" viewBox="0 0 24 24"><rect x="1" y="1" width="11" height="22" fill="#111"/><circle cx="6.5" cy="5" r="3.2" fill="#ff1010"/><circle cx="6.5" cy="12" r="3" fill="#e8c820"/><circle cx="6.5" cy="19" r="3" fill="#20c020"/><path d="M15 6 L22 12 L15 18 Z" fill="none" stroke="#222" stroke-width="1.3"/><path d="M12 12 H15" stroke="#60a0e0"/></svg>
<svg style="position:absolute;left:764px;top:263px;" width="21" height="20" viewBox="0 0 21 20"><path d="M1 1 L8 18 M8 1 L1 18" stroke="#a06040" stroke-width="1.5"/><path d="M10 9 L17 4 V14 Z" fill="#777"/></svg>
<svg style="position:absolute;left:790px;top:263px;" width="21" height="20" viewBox="0 0 21 20"><path d="M12 1 L19 18 M19 1 L12 18" stroke="#a06040" stroke-width="1.5"/><path d="M10 9 L3 4 V14 Z" fill="#777"/></svg>
<div style="position:absolute;left:820px;top:263px;width:26px;height:25px;background:#f0f0f0;border-top:1px solid #fff;border-left:1px solid #fff;border-right:2px solid #a0a0a0;border-bottom:2px solid #a0a0a0"></div>
<svg style="position:absolute;left:824px;top:266px;" width="18" height="19" viewBox="0 0 18 19"><rect x="2" y="1" width="13" height="17" fill="#fff" stroke="#555" stroke-dasharray="2 1"/><path d="M5 6 h7 M5 9 h6 M5 15 h7" stroke="#666" stroke-dasharray="1 1"/><path d="M8 12 l1.5 -2 l1.5 2 l-1.5 1 z" fill="#e04040"/></svg>
<svg style="position:absolute;left:853px;top:264px;" width="21" height="21" viewBox="0 0 21 21"><path d="M2 2 L14 14" stroke="#b06040" stroke-width="1.6"/><path d="M2 10 L10 2" stroke="#b06040" stroke-width="1.4"/><rect x="11" y="11" width="7" height="7" fill="#5070e0" transform="rotate(45 14.5 14.5)"/><path d="M11 15 L18 15" stroke="#fff" stroke-dasharray="1 1"/></svg>
<svg style="position:absolute;left:844px;top:897px;overflow:visible" width="232" height="110" viewBox="0 0 232 110"><g opacity="0.27"><g fill="#969696">
<path d="M37.3 49.4 H193.5 V60.4 H37.3 Z"/>
<path fill-rule="evenodd" d="M208 24.3 a21.5 21.5 0 1 1 0 43 a21.5 21.5 0 1 1 0 -43 Z M208 35.3 a10.5 10.5 0 1 0 0 21 a10.5 10.5 0 1 0 0 -21 Z"/>
<path fill-rule="evenodd" d="M76.7 18.8 a20.4 20.4 0 1 1 0 40.8 a20.4 20.4 0 1 1 0 -40.8 Z M76.7 29 a10.2 10.2 0 1 0 0 20.4 a10.2 10.2 0 1 0 0 -20.4 Z"/>
<circle cx="68.7" cy="7.1" r="6.6"/><circle cx="84.8" cy="7.1" r="6.6"/>
<circle cx="108.8" cy="21" r="6.6"/><circle cx="124.9" cy="21" r="6.6"/>
</g>
<g stroke="#969696" stroke-linecap="round" fill="none">
<path d="M38.8 5.5 V50" stroke-width="10.2"/>
<path d="M117.6 33.4 L116 52 M138.8 33.4 L137 52 M155.6 29.7 L154 52 M172.3 26.8 L170.5 52" stroke-width="10"/>
<path d="M22 29.3 A16.5 16.5 0 1 0 38.5 45.8" stroke-width="11"/>
</g>
<text x="-1" y="97.7" font-family="Liberation Sans" font-weight="bold" font-size="37" fill="#969696" textLength="230" lengthAdjust="spacingAndGlyphs">mostaql.com</text></g></svg>
</body></html>
